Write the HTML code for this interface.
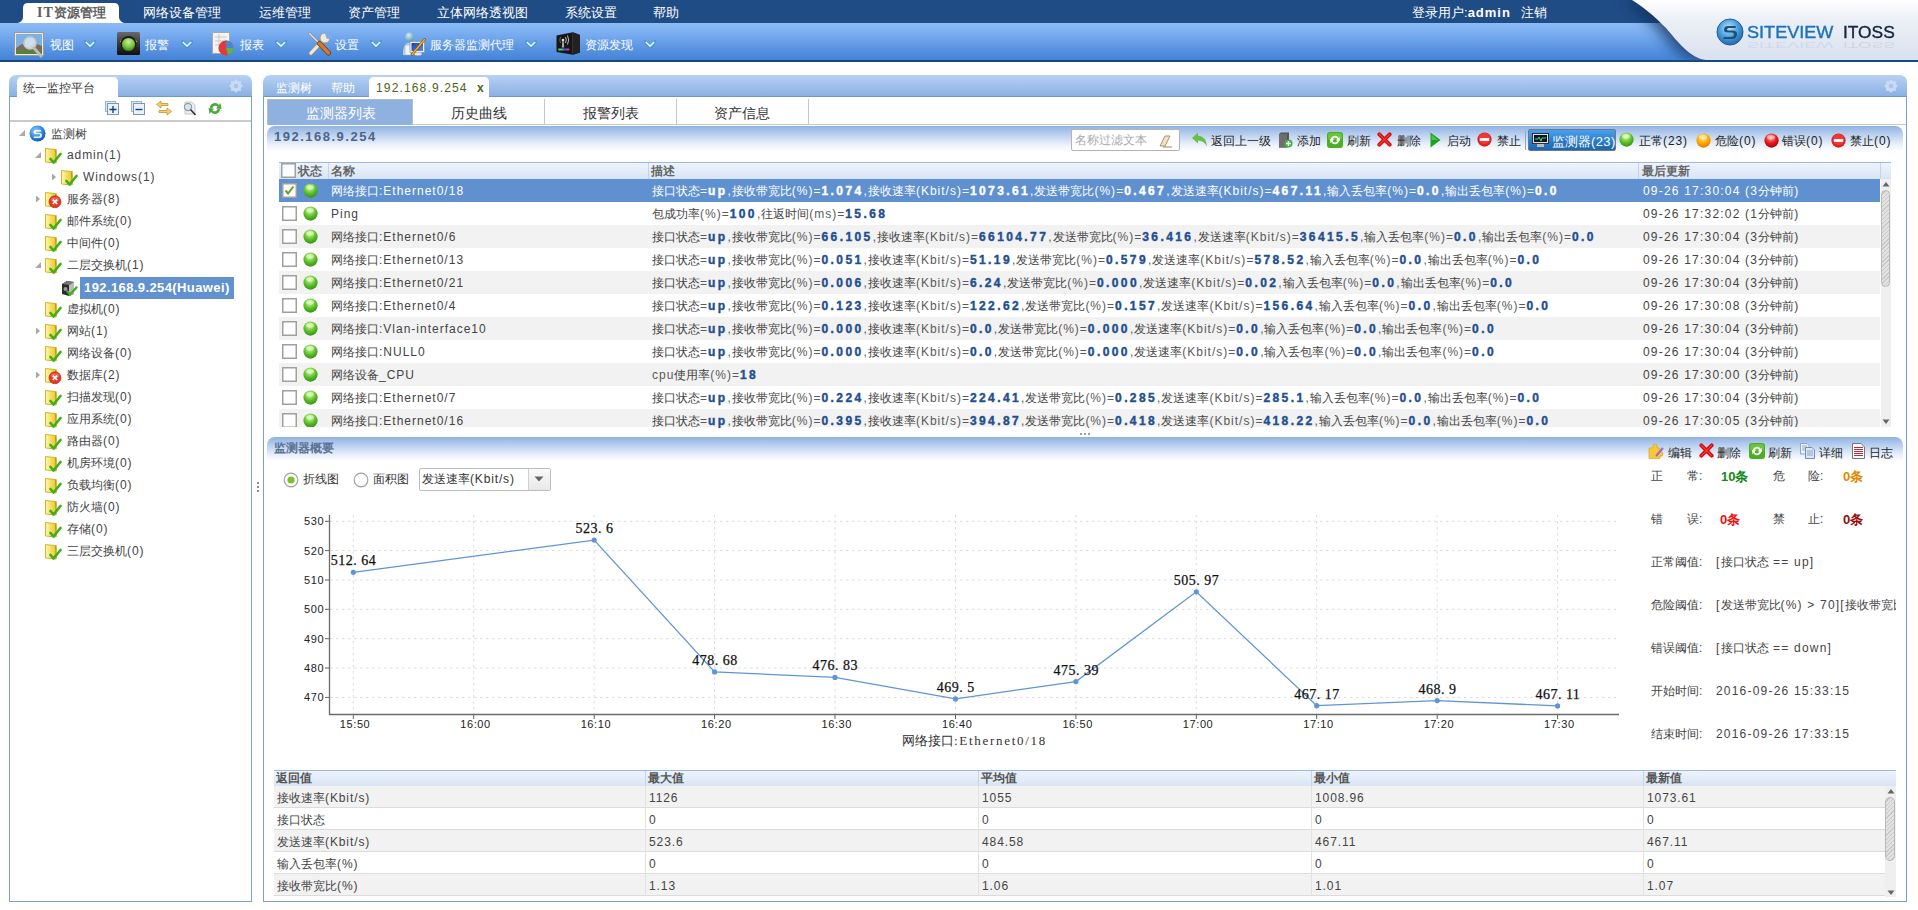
<!DOCTYPE html><html><head><meta charset="utf-8"><title>ITOSS</title><style>*{margin:0;padding:0}
html,body{width:1918px;height:910px;overflow:hidden;background:#fff}
body{position:relative;font-family:"Liberation Sans",sans-serif;font-size:12px;color:#333}
.a{position:absolute}
.t{white-space:nowrap;line-height:1.2}
b{font-weight:bold}
</style></head><body><div class="a" style="left:0px;top:0px;width:1918px;height:23px;background:#204c86"></div><div class="a" style="left:0px;top:23px;width:1918px;height:37px;background:linear-gradient(#8dbdf6 0%,#74a9ee 35%,#5993e0 70%,#4584d8 100%)"></div><div class="a" style="left:0px;top:60px;width:1918px;height:2px;background:#1b477f"></div><svg class="a" style="left:17px;top:2px" width="108" height="22" viewBox="0 0 108 22"><path d="M1 21 Q6 19 6 15 L6 6 Q6 1 11 1 L97 1 Q102 1 102 6 L102 15 Q102 19 107 21 Z" fill="#ffffff"/></svg><div class="a t" style="left:37px;top:5px;font-size:13px;font-weight:bold;color:#5e5e5e"><span style="font-family:'Liberation Serif',serif;font-size:14px;letter-spacing:1px">IT</span></div><div class="a t" style="left:54px;top:5px;font-size:13px;font-weight:bold;color:#5e5e5e">资源管理</div><div class="a t" style="left:143px;top:5px;font-size:13px;color:#ffffff">网络设备管理</div><div class="a t" style="left:259px;top:5px;font-size:13px;color:#ffffff">运维管理</div><div class="a t" style="left:348px;top:5px;font-size:13px;color:#ffffff">资产管理</div><div class="a t" style="left:437px;top:5px;font-size:13px;color:#ffffff">立体网络透视图</div><div class="a t" style="left:565px;top:5px;font-size:13px;color:#ffffff">系统设置</div><div class="a t" style="left:653px;top:5px;font-size:13px;color:#ffffff">帮助</div><div class="a t" style="left:1412px;top:5px;font-size:13px;color:#fff">登录用户:<b style="letter-spacing:1px">admin</b></div><div class="a t" style="left:1521px;top:5px;font-size:13px;color:#fff">注销</div><svg class="a" style="left:1560px;top:0" width="358" height="62" viewBox="0 0 358 62"><defs><linearGradient id="lg1" x1="0" y1="0" x2="0" y2="1"><stop offset="0" stop-color="#ffffff"/><stop offset="0.3" stop-color="#edf1f8"/><stop offset="1" stop-color="#d9e0ee"/></linearGradient><filter id="blr" x="-50%" y="-50%" width="200%" height="200%"><feGaussianBlur stdDeviation="7"/></filter><clipPath id="cp"><rect x="0" y="0" width="358" height="60"/></clipPath></defs><g clip-path="url(#cp)"><path d="M72 0 C88 10 98 20 106 28 C118 42 130 58 146 60 L358 60 L358 0 Z" fill="#0a2a55" opacity="0.75" filter="url(#blr)" transform="translate(-9,0)"/><path d="M72 0 C88 10 98 20 106 28 C118 42 130 58 146 60 L358 60 L358 0 Z" fill="url(#lg1)"/></g></svg><div class="a" style="left:1600px;top:60px;width:318px;height:2px;background:#1b477f"></div><svg class="a" style="left:1715px;top:17px" width="30" height="30" viewBox="0 0 30 30"><defs><radialGradient id="lc" cx="0.45" cy="0.35" r="0.7"><stop offset="0" stop-color="#bfe6fb"/><stop offset="0.5" stop-color="#4aa0dc"/><stop offset="1" stop-color="#1a5fa8"/></radialGradient></defs><circle cx="15" cy="15" r="13" fill="url(#lc)" stroke="#1e5d9e" stroke-width="1"/><path d="M21 9 L13 9 Q9 9 9 13 Q9 15.5 13 15.5 L17 15.5 Q19 15.5 19 17.5 Q19 20 16 20 L9 20 L8 22 L17 22 Q22 22 22 17 Q22 13.5 17.5 13.5 L13 13.5 Q12 13.5 12 12.5 Q12 11 14 11 L20.5 11 Z" fill="#1d4f78"/></svg><div class="a t" style="left:1747px;top:23px;font-size:16px;color:#1b72bd;-webkit-text-stroke:0.35px #1b72bd;transform:scaleX(1.13);transform-origin:0 0">SITEVIEW</div><div class="a t" style="left:1843px;top:23px;font-size:16px;color:#15263d;-webkit-text-stroke:0.35px #15263d;transform:scaleX(1.085);transform-origin:0 0">ITOSS</div><div class="a t" style="left:1747px;top:51px;font-size:16px;color:#1b72bd;opacity:0.10;transform:scaleX(1.13) scaleY(-0.6);transform-origin:0 0">SITEVIEW</div><div class="a t" style="left:1843px;top:51px;font-size:16px;color:#15263d;opacity:0.09;transform:scaleX(1.085) scaleY(-0.6);transform-origin:0 0">ITOSS</div><svg class="a" style="left:14px;top:31px" width="32" height="29" viewBox="0 0 32 29"><rect x="0.5" y="1.5" width="29" height="23" fill="#e8e8e8" stroke="#9a9a9a"/><rect x="2" y="3" width="26" height="20" fill="#7eb0e0"/><path d="M2 17 L8 13 L14 16 L20 12 L28 15 L28 23 L2 23 Z" fill="#7b6a5a"/><rect x="2" y="20" width="26" height="3" fill="#4f8a2a"/><circle cx="16" cy="12" r="6" fill="#dbe9f6" fill-opacity="0.85" stroke="#c9c9c9" stroke-width="1.6"/><path d="M20 17 L27 25" stroke="#bbbbbb" stroke-width="3" stroke-linecap="round"/></svg><div class="a t" style="left:50px;top:38px;font-size:12px;color:#fff">视图</div><svg class="a" style="left:84px;top:40px" width="12" height="9" viewBox="0 0 12 9"><path d="M1.5 1.8 L6 6.3 L10.5 1.8" fill="none" stroke="#2a8fb8" stroke-width="3.2" stroke-linecap="round" stroke-linejoin="round" opacity="0.55"/><path d="M1.8 2 L6 6 L10.2 2" fill="none" stroke="#e6fbff" stroke-width="1.7"/></svg><svg class="a" style="left:117px;top:32px" width="24" height="24" viewBox="0 0 24 24"><defs><linearGradient id="alg" x1="0" y1="0" x2="0" y2="1"><stop offset="0" stop-color="#6a6a6a"/><stop offset="0.5" stop-color="#3a3a3a"/><stop offset="1" stop-color="#0e0e0e"/></linearGradient><radialGradient id="alb" cx="0.5" cy="0.3" r="0.7"><stop offset="0" stop-color="#c8f09a"/><stop offset="0.6" stop-color="#7ac23a"/><stop offset="1" stop-color="#3d7a12"/></radialGradient></defs><rect x="0" y="0" width="23" height="23" rx="1.5" fill="url(#alg)"/><path d="M3.5 10 Q11.5 1 19.5 10" fill="none" stroke="#bdbdbd" stroke-width="1.6"/><circle cx="11.5" cy="12" r="8" fill="#1a1a1a"/><circle cx="11.5" cy="12.5" r="6.6" fill="url(#alb)"/></svg><div class="a t" style="left:145px;top:38px;font-size:12px;color:#fff">报警</div><svg class="a" style="left:181px;top:40px" width="12" height="9" viewBox="0 0 12 9"><path d="M1.5 1.8 L6 6.3 L10.5 1.8" fill="none" stroke="#2a8fb8" stroke-width="3.2" stroke-linecap="round" stroke-linejoin="round" opacity="0.55"/><path d="M1.8 2 L6 6 L10.2 2" fill="none" stroke="#e6fbff" stroke-width="1.7"/></svg><svg class="a" style="left:211px;top:32px" width="24" height="24" viewBox="0 0 24 24"><rect x="1.5" y="0.5" width="17" height="21" fill="#f4f4f4" stroke="#a8a8a8"/><path d="M4 5 H16 M4 9 H16 M4 13 H16 M8 2 V20" stroke="#c8c8c8"/><circle cx="15" cy="16" r="7.5" fill="#e23a3a"/><path d="M15 16 L15 8.5 A7.5 7.5 0 0 1 22.5 16 Z" fill="#4a86d0"/><path d="M15 16 L22.5 16 A7.5 7.5 0 0 1 17 23 Z" fill="#58b848"/></svg><div class="a t" style="left:240px;top:38px;font-size:12px;color:#fff">报表</div><svg class="a" style="left:275px;top:40px" width="12" height="9" viewBox="0 0 12 9"><path d="M1.5 1.8 L6 6.3 L10.5 1.8" fill="none" stroke="#2a8fb8" stroke-width="3.2" stroke-linecap="round" stroke-linejoin="round" opacity="0.55"/><path d="M1.8 2 L6 6 L10.2 2" fill="none" stroke="#e6fbff" stroke-width="1.7"/></svg><svg class="a" style="left:307px;top:31px" width="25" height="25" viewBox="0 0 25 25"><path d="M2.5 2.5 L12 12" stroke="#8d8d8d" stroke-width="2.6" stroke-linecap="round"/><path d="M2.5 2.5 L12 12" stroke="#e6e6e6" stroke-width="1.2" stroke-linecap="round"/><path d="M4 22 L17 8.5" stroke="#9a9486" stroke-width="4.6" stroke-linecap="round"/><path d="M4 22 L17 8.5" stroke="#efe9d8" stroke-width="3.2" stroke-linecap="round"/><circle cx="18" cy="7" r="5" fill="#efe9d8" stroke="#9a9486" stroke-width="0.9"/><path d="M17.5 0.5 L25 0.5 L25 8.5 L19.5 7.5 Z" fill="#7aaced"/><path d="M12.5 12.5 L21.5 22" stroke="#7a3f12" stroke-width="5" stroke-linecap="round"/><path d="M12.5 12.5 L21.5 22" stroke="#d07a34" stroke-width="3.4" stroke-linecap="round"/></svg><div class="a t" style="left:335px;top:38px;font-size:12px;color:#fff">设置</div><svg class="a" style="left:370px;top:40px" width="12" height="9" viewBox="0 0 12 9"><path d="M1.5 1.8 L6 6.3 L10.5 1.8" fill="none" stroke="#2a8fb8" stroke-width="3.2" stroke-linecap="round" stroke-linejoin="round" opacity="0.55"/><path d="M1.8 2 L6 6 L10.2 2" fill="none" stroke="#e6fbff" stroke-width="1.7"/></svg><svg class="a" style="left:402px;top:32px" width="24" height="24" viewBox="0 0 24 24"><defs><radialGradient id="agh" cx="0.4" cy="0.3" r="0.7"><stop offset="0" stop-color="#d8eef6"/><stop offset="1" stop-color="#5f9fb8"/></radialGradient><linearGradient id="ags" x1="0" y1="0" x2="1" y2="1"><stop offset="0" stop-color="#1a3fa8"/><stop offset="1" stop-color="#5a8ee0"/></linearGradient></defs><circle cx="7.5" cy="5" r="4.5" fill="url(#agh)"/><path d="M1 23 Q0.5 11 7.5 10.5 Q11 10.5 12 13 L12 23 Z" fill="#b7d7e4"/><rect x="3" y="13" width="6" height="10" fill="#f2f2f2" stroke="#9aa" stroke-width="0.6"/><rect x="8" y="9.5" width="14.5" height="11" fill="#f4f4f4" stroke="#8a9ab0" stroke-width="0.8"/><rect x="9.5" y="11" width="11.5" height="8" fill="url(#ags)"/><ellipse cx="16" cy="22" rx="4" ry="1.4" fill="#eee" stroke="#aaa" stroke-width="0.5"/><path d="M22.5 7.5 L10 22.5" stroke="#7a4a10" stroke-width="2.6" stroke-linecap="round"/><path d="M22.5 7.5 L10 22.5" stroke="#f0b030" stroke-width="1.5" stroke-linecap="round"/></svg><div class="a t" style="left:430px;top:38px;font-size:12px;color:#fff">服务器监测代理</div><svg class="a" style="left:525px;top:40px" width="12" height="9" viewBox="0 0 12 9"><path d="M1.5 1.8 L6 6.3 L10.5 1.8" fill="none" stroke="#2a8fb8" stroke-width="3.2" stroke-linecap="round" stroke-linejoin="round" opacity="0.55"/><path d="M1.8 2 L6 6 L10.2 2" fill="none" stroke="#e6fbff" stroke-width="1.7"/></svg><svg class="a" style="left:556px;top:32px" width="25" height="23" viewBox="0 0 25 23"><defs><linearGradient id="rb" x1="0" y1="0" x2="1" y2="0"><stop offset="0" stop-color="#6c3"/><stop offset="0.35" stop-color="#3c8"/><stop offset="0.6" stop-color="#44f"/><stop offset="0.8" stop-color="#c3c"/><stop offset="1" stop-color="#e44"/></linearGradient></defs><path d="M0.5 3.5 L17 0.3 L24 3 L24 20.5 L17 22.8 L0.5 20 Z" fill="#161616"/><path d="M16.5 0.5 L24 3 L24 20.5 L16.5 22.8 Z" fill="#222"/><path d="M16.5 1 L16.5 22.5" stroke="#3a3a3a" stroke-width="0.8"/><circle cx="7" cy="8" r="1.3" fill="#ddd"/><path d="M9.5 5 Q11 8 9.5 11 M11.5 3.5 Q13.8 8 11.5 12.5" fill="none" stroke="#bbb" stroke-width="1"/><path d="M4.5 5 Q3 8 4.5 11" fill="none" stroke="#666" stroke-width="1"/><path d="M6.3 9 L5.8 15.5 L8.2 15.5 L7.7 9 Z" fill="#aaa"/><rect x="2" y="16.5" width="11.5" height="2" rx="1" fill="url(#rb)"/></svg><div class="a t" style="left:585px;top:38px;font-size:12px;color:#fff">资源发现</div><svg class="a" style="left:644px;top:40px" width="12" height="9" viewBox="0 0 12 9"><path d="M1.5 1.8 L6 6.3 L10.5 1.8" fill="none" stroke="#2a8fb8" stroke-width="3.2" stroke-linecap="round" stroke-linejoin="round" opacity="0.55"/><path d="M1.8 2 L6 6 L10.2 2" fill="none" stroke="#e6fbff" stroke-width="1.7"/></svg><div class="a" style="left:9px;top:90px;width:243px;height:812px;box-sizing:border-box;border:1px solid #7b9fd3;border-top:none;background:#fff"></div><div class="a" style="left:9px;top:75px;width:243px;height:22px;box-sizing:border-box;border-radius:7px 7px 0 0;background:linear-gradient(#b7d2f4,#8bb0e2);border-bottom:1px solid #7098d0"></div><svg class="a" style="left:17px;top:77px" width="102" height="20" viewBox="0 0 102 20"><path d="M0 20 L0 5 Q0 0 5 0 L96 0 Q101 0 101 5 L101 20 Z" fill="#fff"/></svg><div class="a t" style="left:23px;top:81px;font-size:12px;color:#333">统一监控平台</div><svg class="a" style="left:229px;top:79px" width="14" height="14" viewBox="0 0 14 14"><polygon points="14.00,7.00 11.80,8.99 11.95,11.95 8.99,11.80 7.00,14.00 5.01,11.80 2.05,11.95 2.20,8.99 0.00,7.00 2.20,5.01 2.05,2.05 5.01,2.20 7.00,0.00 8.99,2.20 11.95,2.05 11.80,5.01" fill="#c9dbf3"/><circle cx="7" cy="7" r="2.3" fill="#aac4e8"/></svg><svg class="a" style="left:105px;top:101px" width="14" height="14" viewBox="0 0 14 14"><rect x="0.5" y="0.5" width="10" height="10" fill="#dbeafa" stroke="#9ab4d4"/><rect x="2.5" y="2.5" width="11" height="11" fill="#e9f3fc" stroke="#7f93b3"/><path d="M8 5 V12 M4.5 8.5 H11.5" stroke="#1a3f7a" stroke-width="1.4"/></svg><svg class="a" style="left:131px;top:101px" width="14" height="14" viewBox="0 0 14 14"><rect x="0.5" y="0.5" width="10" height="10" fill="#dbeafa" stroke="#9ab4d4"/><rect x="2.5" y="2.5" width="11" height="11" fill="#e9f3fc" stroke="#7f93b3"/><path d="M4.5 8.5 H11.5" stroke="#1a3f7a" stroke-width="1.4"/></svg><svg class="a" style="left:156px;top:100px" width="16" height="16" viewBox="0 0 16 16"><path d="M0.5 4.5 L5 1 L5 3.5 L12 3.5 L12 5.5 L5 5.5 L5 8 Z" fill="#f6d36a" stroke="#b88a20" stroke-width="0.7"/><path d="M15.5 11.5 L11 8 L11 10.5 L3 10.5 L3 12.5 L11 12.5 L11 15 Z" fill="#f6d36a" stroke="#b88a20" stroke-width="0.7"/></svg><svg class="a" style="left:183px;top:101px" width="14" height="15" viewBox="0 0 14 15"><path d="M2 1 L9 1 L12 4 L12 13 L2 13 Z" fill="#eee" stroke="#bbb" stroke-width="0.8"/><circle cx="5" cy="6" r="3.6" fill="#cfe6f7" stroke="#999" stroke-width="1.2"/><path d="M7.5 8.5 L12.5 14" stroke="#333" stroke-width="1.6"/></svg><svg class="a" style="left:207px;top:100px" width="16" height="17" viewBox="0 0 16 17"><path d="M3 8 A5 5 0 0 1 12 5 L13.5 3 L14.5 9 L9 8.5 L10.5 6.5 A3 3 0 0 0 5.5 8 Z" fill="#4caa3c"/><path d="M13 9 A5 5 0 0 1 4 12 L2.5 14 L1.5 8 L7 8.5 L5.5 10.5 A3 3 0 0 0 10.5 9 Z" fill="#4caa3c"/></svg><div class="a" style="left:10px;top:120px;width:241px;height:2px;background:#cacaca"></div><div class="a" style="left:257px;top:482px;width:2px;height:2px;background:#8a8a8a"></div><div class="a" style="left:257px;top:486px;width:2px;height:2px;background:#8a8a8a"></div><div class="a" style="left:257px;top:490px;width:2px;height:2px;background:#8a8a8a"></div><svg class="a" style="left:18px;top:129px" width="8" height="8" viewBox="0 0 8 8"><path d="M7 1 L7 7 L1 7 Z" fill="#a8a8a8"/></svg><svg class="a" style="left:29px;top:125px" width="17" height="17" viewBox="0 0 17 17"><defs><radialGradient id="lb" cx="0.4" cy="0.35" r="0.7"><stop offset="0" stop-color="#9fd4ff"/><stop offset="0.6" stop-color="#2f86e0"/><stop offset="1" stop-color="#1050b0"/></radialGradient></defs><circle cx="8.5" cy="8.5" r="8" fill="url(#lb)"/><path d="M12 5 L7 5 Q4.5 5 4.5 7.5 Q4.5 9 7 9 L10 9 Q11 9 11 10 Q11 11.5 9.5 11.5 L5 11.5 L4.5 13 L10 13 Q13 13 13 10.5 Q13 8 10.5 8 L7.5 8 Q6.5 8 6.5 7.3 Q6.5 6.5 7.5 6.5 L12 6.5 Z" fill="#fff" opacity="0.9"/></svg><div class="a t" style="left:51px;top:127px;font-size:12px;color:#444">监测树</div><svg class="a" style="left:34px;top:151px" width="8" height="8" viewBox="0 0 8 8"><path d="M7 1 L7 7 L1 7 Z" fill="#a8a8a8"/></svg><svg class="a" style="left:45px;top:148px" width="17" height="17" viewBox="0 0 17 17"><defs><linearGradient id="fy148" x1="0" y1="0" x2="1" y2="0"><stop offset="0" stop-color="#fff7b0"/><stop offset="1" stop-color="#e8c820"/></linearGradient></defs><path d="M0.5 0.5 L10 1.5 L11 2.5 L11 15 L0.5 14 Z" fill="url(#fy148)" stroke="#c9a400" stroke-width="0.8"/><path d="M10 1.5 L11.5 1 L11.5 14.5 L11 15 Z" fill="#b89a10"/><path d="M5.5 11 L8.5 14.5 L15.5 6" fill="none" stroke="#3fae1e" stroke-width="2.6" stroke-linecap="round" stroke-linejoin="round"/></svg><div class="a t" style="left:67px;top:148px;font-size:12px;color:#444"><span style="letter-spacing:0.9px">admin(1)</span></div><svg class="a" style="left:50px;top:173px" width="8" height="8" viewBox="0 0 8 8"><path d="M2 0.5 L6 4 L2 7.5 Z" fill="#a8a8a8"/></svg><svg class="a" style="left:61px;top:170px" width="17" height="17" viewBox="0 0 17 17"><defs><linearGradient id="fy170" x1="0" y1="0" x2="1" y2="0"><stop offset="0" stop-color="#fff7b0"/><stop offset="1" stop-color="#e8c820"/></linearGradient></defs><path d="M0.5 0.5 L10 1.5 L11 2.5 L11 15 L0.5 14 Z" fill="url(#fy170)" stroke="#c9a400" stroke-width="0.8"/><path d="M10 1.5 L11.5 1 L11.5 14.5 L11 15 Z" fill="#b89a10"/><path d="M5.5 11 L8.5 14.5 L15.5 6" fill="none" stroke="#3fae1e" stroke-width="2.6" stroke-linecap="round" stroke-linejoin="round"/></svg><div class="a t" style="left:83px;top:170px;font-size:12px;color:#444"><span style="letter-spacing:0.9px">Windows(1)</span></div><svg class="a" style="left:34px;top:195px" width="8" height="8" viewBox="0 0 8 8"><path d="M2 0.5 L6 4 L2 7.5 Z" fill="#a8a8a8"/></svg><svg class="a" style="left:45px;top:192px" width="17" height="17" viewBox="0 0 17 17"><defs><linearGradient id="fy192" x1="0" y1="0" x2="1" y2="0"><stop offset="0" stop-color="#fff7b0"/><stop offset="1" stop-color="#e8c820"/></linearGradient></defs><path d="M0.5 0.5 L10 1.5 L11 2.5 L11 15 L0.5 14 Z" fill="url(#fy192)" stroke="#c9a400" stroke-width="0.8"/><path d="M10 1.5 L11.5 1 L11.5 14.5 L11 15 Z" fill="#b89a10"/><circle cx="10" cy="9.8" r="6" fill="#e23a28" stroke="#b01a10" stroke-width="0.6"/><ellipse cx="10" cy="7.6" rx="4" ry="2.4" fill="#ff8a7a" opacity="0.55"/><path d="M7.8 7.6 L12.2 12 M12.2 7.6 L7.8 12" stroke="#fff" stroke-width="1.7"/></svg><div class="a t" style="left:67px;top:192px;font-size:12px;color:#444">服务器<span style="letter-spacing:0.9px">(8)</span></div><svg class="a" style="left:45px;top:214px" width="17" height="17" viewBox="0 0 17 17"><defs><linearGradient id="fy214" x1="0" y1="0" x2="1" y2="0"><stop offset="0" stop-color="#fff7b0"/><stop offset="1" stop-color="#e8c820"/></linearGradient></defs><path d="M0.5 0.5 L10 1.5 L11 2.5 L11 15 L0.5 14 Z" fill="url(#fy214)" stroke="#c9a400" stroke-width="0.8"/><path d="M10 1.5 L11.5 1 L11.5 14.5 L11 15 Z" fill="#b89a10"/><path d="M5.5 11 L8.5 14.5 L15.5 6" fill="none" stroke="#3fae1e" stroke-width="2.6" stroke-linecap="round" stroke-linejoin="round"/></svg><div class="a t" style="left:67px;top:214px;font-size:12px;color:#444">邮件系统<span style="letter-spacing:0.9px">(0)</span></div><svg class="a" style="left:45px;top:236px" width="17" height="17" viewBox="0 0 17 17"><defs><linearGradient id="fy236" x1="0" y1="0" x2="1" y2="0"><stop offset="0" stop-color="#fff7b0"/><stop offset="1" stop-color="#e8c820"/></linearGradient></defs><path d="M0.5 0.5 L10 1.5 L11 2.5 L11 15 L0.5 14 Z" fill="url(#fy236)" stroke="#c9a400" stroke-width="0.8"/><path d="M10 1.5 L11.5 1 L11.5 14.5 L11 15 Z" fill="#b89a10"/><path d="M5.5 11 L8.5 14.5 L15.5 6" fill="none" stroke="#3fae1e" stroke-width="2.6" stroke-linecap="round" stroke-linejoin="round"/></svg><div class="a t" style="left:67px;top:236px;font-size:12px;color:#444">中间件<span style="letter-spacing:0.9px">(0)</span></div><svg class="a" style="left:34px;top:261px" width="8" height="8" viewBox="0 0 8 8"><path d="M7 1 L7 7 L1 7 Z" fill="#a8a8a8"/></svg><svg class="a" style="left:45px;top:258px" width="17" height="17" viewBox="0 0 17 17"><defs><linearGradient id="fy258" x1="0" y1="0" x2="1" y2="0"><stop offset="0" stop-color="#fff7b0"/><stop offset="1" stop-color="#e8c820"/></linearGradient></defs><path d="M0.5 0.5 L10 1.5 L11 2.5 L11 15 L0.5 14 Z" fill="url(#fy258)" stroke="#c9a400" stroke-width="0.8"/><path d="M10 1.5 L11.5 1 L11.5 14.5 L11 15 Z" fill="#b89a10"/><path d="M5.5 11 L8.5 14.5 L15.5 6" fill="none" stroke="#3fae1e" stroke-width="2.6" stroke-linecap="round" stroke-linejoin="round"/></svg><div class="a t" style="left:67px;top:258px;font-size:12px;color:#444">二层交换机<span style="letter-spacing:0.9px">(1)</span></div><svg class="a" style="left:61px;top:280px" width="17" height="17" viewBox="0 0 17 17"><path d="M1 4 L6 1 L13 2 L13 14 L8 16 L1 14 Z" fill="#2a2a2a"/><path d="M6 1 L13 2 L8 5 L1 4 Z" fill="#777"/><path d="M8 5 L13 2 L13 14 L8 16 Z" fill="#bbb"/><circle cx="4.5" cy="9" r="2" fill="#999"/><path d="M6.5 11.5 L9 14.5 L15.5 7.5" fill="none" stroke="#3fae1e" stroke-width="2.4" stroke-linecap="round" stroke-linejoin="round"/></svg><div class="a" style="left:80px;top:277px;width:154px;height:22px;background:#6291d0"></div><div class="a t" style="left:84px;top:280px;font-size:13px;font-weight:bold;color:#fff"><span style="letter-spacing:0.4px">192.168.9.254(Huawei)</span></div><svg class="a" style="left:45px;top:302px" width="17" height="17" viewBox="0 0 17 17"><defs><linearGradient id="fy302" x1="0" y1="0" x2="1" y2="0"><stop offset="0" stop-color="#fff7b0"/><stop offset="1" stop-color="#e8c820"/></linearGradient></defs><path d="M0.5 0.5 L10 1.5 L11 2.5 L11 15 L0.5 14 Z" fill="url(#fy302)" stroke="#c9a400" stroke-width="0.8"/><path d="M10 1.5 L11.5 1 L11.5 14.5 L11 15 Z" fill="#b89a10"/><path d="M5.5 11 L8.5 14.5 L15.5 6" fill="none" stroke="#3fae1e" stroke-width="2.6" stroke-linecap="round" stroke-linejoin="round"/></svg><div class="a t" style="left:67px;top:302px;font-size:12px;color:#444">虚拟机<span style="letter-spacing:0.9px">(0)</span></div><svg class="a" style="left:34px;top:327px" width="8" height="8" viewBox="0 0 8 8"><path d="M2 0.5 L6 4 L2 7.5 Z" fill="#a8a8a8"/></svg><svg class="a" style="left:45px;top:324px" width="17" height="17" viewBox="0 0 17 17"><defs><linearGradient id="fy324" x1="0" y1="0" x2="1" y2="0"><stop offset="0" stop-color="#fff7b0"/><stop offset="1" stop-color="#e8c820"/></linearGradient></defs><path d="M0.5 0.5 L10 1.5 L11 2.5 L11 15 L0.5 14 Z" fill="url(#fy324)" stroke="#c9a400" stroke-width="0.8"/><path d="M10 1.5 L11.5 1 L11.5 14.5 L11 15 Z" fill="#b89a10"/><path d="M5.5 11 L8.5 14.5 L15.5 6" fill="none" stroke="#3fae1e" stroke-width="2.6" stroke-linecap="round" stroke-linejoin="round"/></svg><div class="a t" style="left:67px;top:324px;font-size:12px;color:#444">网站<span style="letter-spacing:0.9px">(1)</span></div><svg class="a" style="left:45px;top:346px" width="17" height="17" viewBox="0 0 17 17"><defs><linearGradient id="fy346" x1="0" y1="0" x2="1" y2="0"><stop offset="0" stop-color="#fff7b0"/><stop offset="1" stop-color="#e8c820"/></linearGradient></defs><path d="M0.5 0.5 L10 1.5 L11 2.5 L11 15 L0.5 14 Z" fill="url(#fy346)" stroke="#c9a400" stroke-width="0.8"/><path d="M10 1.5 L11.5 1 L11.5 14.5 L11 15 Z" fill="#b89a10"/><path d="M5.5 11 L8.5 14.5 L15.5 6" fill="none" stroke="#3fae1e" stroke-width="2.6" stroke-linecap="round" stroke-linejoin="round"/></svg><div class="a t" style="left:67px;top:346px;font-size:12px;color:#444">网络设备<span style="letter-spacing:0.9px">(0)</span></div><svg class="a" style="left:34px;top:371px" width="8" height="8" viewBox="0 0 8 8"><path d="M2 0.5 L6 4 L2 7.5 Z" fill="#a8a8a8"/></svg><svg class="a" style="left:45px;top:368px" width="17" height="17" viewBox="0 0 17 17"><defs><linearGradient id="fy368" x1="0" y1="0" x2="1" y2="0"><stop offset="0" stop-color="#fff7b0"/><stop offset="1" stop-color="#e8c820"/></linearGradient></defs><path d="M0.5 0.5 L10 1.5 L11 2.5 L11 15 L0.5 14 Z" fill="url(#fy368)" stroke="#c9a400" stroke-width="0.8"/><path d="M10 1.5 L11.5 1 L11.5 14.5 L11 15 Z" fill="#b89a10"/><circle cx="10" cy="9.8" r="6" fill="#e23a28" stroke="#b01a10" stroke-width="0.6"/><ellipse cx="10" cy="7.6" rx="4" ry="2.4" fill="#ff8a7a" opacity="0.55"/><path d="M7.8 7.6 L12.2 12 M12.2 7.6 L7.8 12" stroke="#fff" stroke-width="1.7"/></svg><div class="a t" style="left:67px;top:368px;font-size:12px;color:#444">数据库<span style="letter-spacing:0.9px">(2)</span></div><svg class="a" style="left:45px;top:390px" width="17" height="17" viewBox="0 0 17 17"><defs><linearGradient id="fy390" x1="0" y1="0" x2="1" y2="0"><stop offset="0" stop-color="#fff7b0"/><stop offset="1" stop-color="#e8c820"/></linearGradient></defs><path d="M0.5 0.5 L10 1.5 L11 2.5 L11 15 L0.5 14 Z" fill="url(#fy390)" stroke="#c9a400" stroke-width="0.8"/><path d="M10 1.5 L11.5 1 L11.5 14.5 L11 15 Z" fill="#b89a10"/><path d="M5.5 11 L8.5 14.5 L15.5 6" fill="none" stroke="#3fae1e" stroke-width="2.6" stroke-linecap="round" stroke-linejoin="round"/></svg><div class="a t" style="left:67px;top:390px;font-size:12px;color:#444">扫描发现<span style="letter-spacing:0.9px">(0)</span></div><svg class="a" style="left:45px;top:412px" width="17" height="17" viewBox="0 0 17 17"><defs><linearGradient id="fy412" x1="0" y1="0" x2="1" y2="0"><stop offset="0" stop-color="#fff7b0"/><stop offset="1" stop-color="#e8c820"/></linearGradient></defs><path d="M0.5 0.5 L10 1.5 L11 2.5 L11 15 L0.5 14 Z" fill="url(#fy412)" stroke="#c9a400" stroke-width="0.8"/><path d="M10 1.5 L11.5 1 L11.5 14.5 L11 15 Z" fill="#b89a10"/><path d="M5.5 11 L8.5 14.5 L15.5 6" fill="none" stroke="#3fae1e" stroke-width="2.6" stroke-linecap="round" stroke-linejoin="round"/></svg><div class="a t" style="left:67px;top:412px;font-size:12px;color:#444">应用系统<span style="letter-spacing:0.9px">(0)</span></div><svg class="a" style="left:45px;top:434px" width="17" height="17" viewBox="0 0 17 17"><defs><linearGradient id="fy434" x1="0" y1="0" x2="1" y2="0"><stop offset="0" stop-color="#fff7b0"/><stop offset="1" stop-color="#e8c820"/></linearGradient></defs><path d="M0.5 0.5 L10 1.5 L11 2.5 L11 15 L0.5 14 Z" fill="url(#fy434)" stroke="#c9a400" stroke-width="0.8"/><path d="M10 1.5 L11.5 1 L11.5 14.5 L11 15 Z" fill="#b89a10"/><path d="M5.5 11 L8.5 14.5 L15.5 6" fill="none" stroke="#3fae1e" stroke-width="2.6" stroke-linecap="round" stroke-linejoin="round"/></svg><div class="a t" style="left:67px;top:434px;font-size:12px;color:#444">路由器<span style="letter-spacing:0.9px">(0)</span></div><svg class="a" style="left:45px;top:456px" width="17" height="17" viewBox="0 0 17 17"><defs><linearGradient id="fy456" x1="0" y1="0" x2="1" y2="0"><stop offset="0" stop-color="#fff7b0"/><stop offset="1" stop-color="#e8c820"/></linearGradient></defs><path d="M0.5 0.5 L10 1.5 L11 2.5 L11 15 L0.5 14 Z" fill="url(#fy456)" stroke="#c9a400" stroke-width="0.8"/><path d="M10 1.5 L11.5 1 L11.5 14.5 L11 15 Z" fill="#b89a10"/><path d="M5.5 11 L8.5 14.5 L15.5 6" fill="none" stroke="#3fae1e" stroke-width="2.6" stroke-linecap="round" stroke-linejoin="round"/></svg><div class="a t" style="left:67px;top:456px;font-size:12px;color:#444">机房环境<span style="letter-spacing:0.9px">(0)</span></div><svg class="a" style="left:45px;top:478px" width="17" height="17" viewBox="0 0 17 17"><defs><linearGradient id="fy478" x1="0" y1="0" x2="1" y2="0"><stop offset="0" stop-color="#fff7b0"/><stop offset="1" stop-color="#e8c820"/></linearGradient></defs><path d="M0.5 0.5 L10 1.5 L11 2.5 L11 15 L0.5 14 Z" fill="url(#fy478)" stroke="#c9a400" stroke-width="0.8"/><path d="M10 1.5 L11.5 1 L11.5 14.5 L11 15 Z" fill="#b89a10"/><path d="M5.5 11 L8.5 14.5 L15.5 6" fill="none" stroke="#3fae1e" stroke-width="2.6" stroke-linecap="round" stroke-linejoin="round"/></svg><div class="a t" style="left:67px;top:478px;font-size:12px;color:#444">负载均衡<span style="letter-spacing:0.9px">(0)</span></div><svg class="a" style="left:45px;top:500px" width="17" height="17" viewBox="0 0 17 17"><defs><linearGradient id="fy500" x1="0" y1="0" x2="1" y2="0"><stop offset="0" stop-color="#fff7b0"/><stop offset="1" stop-color="#e8c820"/></linearGradient></defs><path d="M0.5 0.5 L10 1.5 L11 2.5 L11 15 L0.5 14 Z" fill="url(#fy500)" stroke="#c9a400" stroke-width="0.8"/><path d="M10 1.5 L11.5 1 L11.5 14.5 L11 15 Z" fill="#b89a10"/><path d="M5.5 11 L8.5 14.5 L15.5 6" fill="none" stroke="#3fae1e" stroke-width="2.6" stroke-linecap="round" stroke-linejoin="round"/></svg><div class="a t" style="left:67px;top:500px;font-size:12px;color:#444">防火墙<span style="letter-spacing:0.9px">(0)</span></div><svg class="a" style="left:45px;top:522px" width="17" height="17" viewBox="0 0 17 17"><defs><linearGradient id="fy522" x1="0" y1="0" x2="1" y2="0"><stop offset="0" stop-color="#fff7b0"/><stop offset="1" stop-color="#e8c820"/></linearGradient></defs><path d="M0.5 0.5 L10 1.5 L11 2.5 L11 15 L0.5 14 Z" fill="url(#fy522)" stroke="#c9a400" stroke-width="0.8"/><path d="M10 1.5 L11.5 1 L11.5 14.5 L11 15 Z" fill="#b89a10"/><path d="M5.5 11 L8.5 14.5 L15.5 6" fill="none" stroke="#3fae1e" stroke-width="2.6" stroke-linecap="round" stroke-linejoin="round"/></svg><div class="a t" style="left:67px;top:522px;font-size:12px;color:#444">存储<span style="letter-spacing:0.9px">(0)</span></div><svg class="a" style="left:45px;top:544px" width="17" height="17" viewBox="0 0 17 17"><defs><linearGradient id="fy544" x1="0" y1="0" x2="1" y2="0"><stop offset="0" stop-color="#fff7b0"/><stop offset="1" stop-color="#e8c820"/></linearGradient></defs><path d="M0.5 0.5 L10 1.5 L11 2.5 L11 15 L0.5 14 Z" fill="url(#fy544)" stroke="#c9a400" stroke-width="0.8"/><path d="M10 1.5 L11.5 1 L11.5 14.5 L11 15 Z" fill="#b89a10"/><path d="M5.5 11 L8.5 14.5 L15.5 6" fill="none" stroke="#3fae1e" stroke-width="2.6" stroke-linecap="round" stroke-linejoin="round"/></svg><div class="a t" style="left:67px;top:544px;font-size:12px;color:#444">三层交换机<span style="letter-spacing:0.9px">(0)</span></div><div class="a" style="left:263px;top:90px;width:1644px;height:812px;box-sizing:border-box;border:1px solid #7b9fd3;border-top:none;background:#fff"></div><div class="a" style="left:263px;top:75px;width:1644px;height:22px;box-sizing:border-box;border-radius:7px 7px 0 0;background:linear-gradient(#b7d2f4,#8bb0e2);border-bottom:1px solid #7098d0"></div><div class="a t" style="left:276px;top:81px;font-size:12px;color:#fff">监测树</div><div class="a t" style="left:331px;top:81px;font-size:12px;color:#fff">帮助</div><svg class="a" style="left:369px;top:77px" width="121" height="20" viewBox="0 0 121 20"><path d="M0 20 L0 5 Q0 0 5 0 L115 0 Q120 0 120 5 L120 20 Z" fill="#fff"/></svg><div class="a t" style="left:376px;top:81px;font-size:12px;color:#4d6420"><span style="letter-spacing:1.15px">192.168.9.254</span></div><div class="a t" style="left:477px;top:81px;font-size:12px;font-weight:bold;color:#4d6420">x</div><svg class="a" style="left:1884px;top:79px" width="14" height="14" viewBox="0 0 14 14"><polygon points="14.00,7.00 11.80,8.99 11.95,11.95 8.99,11.80 7.00,14.00 5.01,11.80 2.05,11.95 2.20,8.99 0.00,7.00 2.20,5.01 2.05,2.05 5.01,2.20 7.00,0.00 8.99,2.20 11.95,2.05 11.80,5.01" fill="#c9dbf3"/><circle cx="7" cy="7" r="2.3" fill="#aac4e8"/></svg><div class="a" style="left:264px;top:97px;width:1642px;height:28px;background:#fff"></div><div class="a" style="left:267px;top:99px;width:146px;height:26px;box-sizing:border-box;background:#8fb1e0;border-top:1px solid #b8b8b8;border-left:1px solid #c0c0c0;border-right:1px solid #c0c0c0"></div><div class="a t" style="left:306px;top:105px;font-size:14px;color:#fff">监测器列表</div><div class="a" style="left:544px;top:99px;width:1px;height:25px;background:#c8c8c8"></div><div class="a" style="left:676px;top:99px;width:1px;height:25px;background:#c8c8c8"></div><div class="a" style="left:808px;top:99px;width:1px;height:25px;background:#c8c8c8"></div><div class="a t" style="left:451px;top:105px;font-size:14px;color:#333">历史曲线</div><div class="a t" style="left:583px;top:105px;font-size:14px;color:#333">报警列表</div><div class="a t" style="left:714px;top:105px;font-size:14px;color:#333">资产信息</div><div class="a" style="left:413px;top:124px;width:1493px;height:1px;background:#c8c8c8"></div><div class="a" style="left:267px;top:126px;width:1636px;height:26px;border-radius:8px 8px 0 0;background:linear-gradient(#8fb2e1 0%,#c3d6f1 40%,#eef3fb 75%,#ffffff 100%)"></div><div class="a t" style="left:274px;top:129px;font-size:13px;font-weight:bold;color:#4d6489"><span style="letter-spacing:1.5px">192.168.9.254</span></div><div class="a" style="left:1071px;top:129px;width:109px;height:22px;box-sizing:border-box;border:1px solid #b4b4b4;border-radius:2px;background:#fff"></div><div class="a t" style="left:1075px;top:133px;font-size:12px;color:#aaa">名称过滤文本</div><svg class="a" style="left:1158px;top:134px" width="15" height="14" viewBox="0 0 15 14"><path d="M2 12 L7 2 L12 2 L7 12 Z" fill="#efe4c8" stroke="#a08a60" stroke-width="0.9"/><path d="M5 13 H14" stroke="#a08a60"/></svg><svg class="a" style="left:1191px;top:132px" width="17" height="16" viewBox="0 0 17 16"><path d="M1 6 L7 0.5 L7 3.5 Q15 4 16 14.5 Q13 8.5 7 8.5 L7 11.5 Z" fill="#6abf4a"/></svg><div class="a t" style="left:1211px;top:134px;font-size:12px;color:#222">返回上一级</div><svg class="a" style="left:1278px;top:132px" width="15" height="16" viewBox="0 0 15 16"><path d="M1 2 L3 0.5 L11 0.5 L11 14 L9 15.5 L1 15.5 Z" fill="#555"/><path d="M1 2 L9 2 L9 15.5 L1 15.5 Z" fill="#6e6e6e"/><circle cx="10.5" cy="11.5" r="4" fill="#3fb43a"/><path d="M10.5 9 V14 M8 11.5 H13" stroke="#fff" stroke-width="1.4"/></svg><div class="a t" style="left:1297px;top:134px;font-size:12px;color:#222">添加</div><svg class="a" style="left:1327px;top:132px" width="16" height="16" viewBox="0 0 16 16"><rect x="0" y="0" width="16" height="16" rx="3" fill="#4cae22"/><rect x="1" y="1" width="14" height="7" rx="2" fill="#7fd04a" opacity="0.6"/><path d="M4 8.5 A4 4 0 0 1 11.5 6 L12.5 4.5 L13 9 L9 8.5 L10.3 7.2 A2.5 2.5 0 0 0 5.5 8.5 Z" fill="#fff"/><path d="M12 7.5 A4 4 0 0 1 4.5 10 L3.5 11.5 L3 7 L7 7.5 L5.7 8.8 A2.5 2.5 0 0 0 10.5 7.5 Z" fill="#fff"/></svg><div class="a t" style="left:1347px;top:134px;font-size:12px;color:#222">刷新</div><svg class="a" style="left:1377px;top:132px" width="15" height="15" viewBox="0 0 16 16"><path d="M2.5 2.5 L13.5 13.5 M13.5 2.5 L2.5 13.5" stroke="#d81010" stroke-width="4.2" stroke-linecap="round"/><path d="M2.5 2.5 L13.5 13.5 M13.5 2.5 L2.5 13.5" stroke="#ff5a5a" stroke-width="1.2" stroke-linecap="round" opacity="0.6"/></svg><div class="a t" style="left:1397px;top:134px;font-size:12px;color:#222">删除</div><svg class="a" style="left:1430px;top:132px" width="11" height="16" viewBox="0 0 11 16"><path d="M0.5 0.5 L10.5 8 L0.5 15.5 Z" fill="#1ea020"/><path d="M1.5 2.5 L8 8 L1.5 8 Z" fill="#5fd05a" opacity="0.7"/></svg><div class="a t" style="left:1447px;top:134px;font-size:12px;color:#222">启动</div><svg class="a" style="left:1477px;top:132px" width="15" height="15" viewBox="0 0 16 16"><circle cx="8" cy="8" r="7.6" fill="#e02020"/><circle cx="8" cy="7" r="6" fill="#ff5050" opacity="0.5"/><rect x="3" y="6.5" width="10" height="3" fill="#fff"/></svg><div class="a t" style="left:1497px;top:134px;font-size:12px;color:#222">禁止</div><div class="a" style="left:1525px;top:131px;width:1px;height:19px;background:#8aa6cc"></div><div class="a" style="left:1528px;top:129px;width:88px;height:22px;box-sizing:border-box;border:1px solid #6a7a8a;border-radius:2px;background:linear-gradient(#4aa0ee,#2a7ac8 60%,#1c66ac)"></div><svg class="a" style="left:1532px;top:133px" width="17" height="15" viewBox="0 0 17 15"><rect x="0.5" y="0.5" width="16" height="10" fill="#ddd" stroke="#333"/><rect x="2" y="2" width="13" height="7" fill="#113"/><path d="M3 6 L6 6 L7 4 L9 8 L10 5 L14 5" stroke="#4f4" fill="none" stroke-width="0.9"/><rect x="5" y="11" width="7" height="3" fill="#bbb"/></svg><div class="a t" style="left:1552px;top:134px;font-size:13px;color:#fff">监测器<span style="letter-spacing:0.4px">(23)</span></div><svg class="a" style="left:1619px;top:132px" width="15" height="15" viewBox="0 0 16 16"><defs><radialGradient id="g1" cx="0.45" cy="0.3" r="0.75"><stop offset="0" stop-color="#d6ff9a"/><stop offset="0.55" stop-color="#5cc02a"/><stop offset="1" stop-color="#2f8a12"/></radialGradient></defs><circle cx="8" cy="8" r="7.6" fill="url(#g1)"/><ellipse cx="7.5" cy="4.6" rx="4.2" ry="2.6" fill="#fff" opacity="0.45"/></svg><div class="a t" style="left:1639px;top:134px;font-size:12px;color:#222">正常<span style="letter-spacing:0.9px">(23)</span></div><svg class="a" style="left:1696px;top:133px" width="15" height="15" viewBox="0 0 16 16"><defs><radialGradient id="g2" cx="0.45" cy="0.3" r="0.75"><stop offset="0" stop-color="#ffe680"/><stop offset="0.55" stop-color="#ffa800"/><stop offset="1" stop-color="#e07000"/></radialGradient></defs><circle cx="8" cy="8" r="7.6" fill="url(#g2)"/><ellipse cx="7.5" cy="4.6" rx="4.2" ry="2.6" fill="#fff" opacity="0.45"/></svg><div class="a t" style="left:1715px;top:134px;font-size:12px;color:#222">危险<span style="letter-spacing:0.9px">(0)</span></div><svg class="a" style="left:1764px;top:133px" width="15" height="15" viewBox="0 0 16 16"><defs><radialGradient id="g3" cx="0.45" cy="0.3" r="0.75"><stop offset="0" stop-color="#ff9a9a"/><stop offset="0.55" stop-color="#e81818"/><stop offset="1" stop-color="#9a0000"/></radialGradient></defs><circle cx="8" cy="8" r="7.6" fill="url(#g3)"/><ellipse cx="7.5" cy="4.6" rx="4.2" ry="2.6" fill="#fff" opacity="0.45"/></svg><div class="a t" style="left:1782px;top:134px;font-size:12px;color:#222">错误<span style="letter-spacing:0.9px">(0)</span></div><svg class="a" style="left:1831px;top:133px" width="15" height="15" viewBox="0 0 16 16"><circle cx="8" cy="8" r="7.6" fill="#e02020"/><circle cx="8" cy="7" r="6" fill="#ff5050" opacity="0.5"/><rect x="3" y="6.5" width="10" height="3" fill="#fff"/></svg><div class="a t" style="left:1850px;top:134px;font-size:12px;color:#222">禁止<span style="letter-spacing:0.9px">(0)</span></div><div class="a" style="left:279px;top:162px;width:1612px;height:17px;box-sizing:border-box;border-top:1px solid #9ab8e4;background:linear-gradient(#eef4fc,#d8e4f5)"></div><svg class="a" style="left:281px;top:163px" width="15" height="15" viewBox="0 0 15 15"><rect x="0.75" y="0.75" width="13.5" height="13.5" fill="#fbfcfe" stroke="#a0a0a0" stroke-width="1.5"/></svg><div class="a t" style="left:298px;top:164px;font-size:12px;font-weight:bold;color:#666">状态</div><div class="a" style="left:328px;top:163px;width:1px;height:16px;background:#c5d4ea"></div><div class="a t" style="left:331px;top:164px;font-size:12px;font-weight:bold;color:#666">名称</div><div class="a" style="left:648px;top:163px;width:1px;height:16px;background:#c5d4ea"></div><div class="a t" style="left:651px;top:164px;font-size:12px;font-weight:bold;color:#666">描述</div><div class="a" style="left:1638px;top:163px;width:1px;height:16px;background:#c5d4ea"></div><div class="a t" style="left:1642px;top:164px;font-size:12px;font-weight:bold;color:#666">最后更新</div><div class="a" style="left:1880px;top:163px;width:1px;height:16px;background:#c5d4ea"></div><div class="a" style="left:279px;top:179px;width:1601px;height:23px;background:#5f90d0"></div><svg class="a" style="left:282px;top:183px" width="15" height="15" viewBox="0 0 15 15"><rect x="0.75" y="0.75" width="13.5" height="13.5" fill="#fff" stroke="#a0a0a0" stroke-width="1.5"/><path d="M3.5 7.5 L6 10.5 L11.5 3.5" fill="none" stroke="#6a9a1a" stroke-width="2"/></svg><svg class="a" style="left:303px;top:183px" width="15" height="15" viewBox="0 0 16 16"><defs><radialGradient id="g4" cx="0.45" cy="0.3" r="0.75"><stop offset="0" stop-color="#d6ff9a"/><stop offset="0.55" stop-color="#5cc02a"/><stop offset="1" stop-color="#2f8a12"/></radialGradient></defs><circle cx="8" cy="8" r="7.6" fill="url(#g4)"/><ellipse cx="7.5" cy="4.6" rx="4.2" ry="2.6" fill="#fff" opacity="0.45"/></svg><div class="a t" style="left:331px;top:184px;font-size:12px;color:#fff;">网络接口<span style="letter-spacing:1.0px">:Ethernet0/18</span></div><div class="a t" style="left:652px;top:184px;font-size:12px;color:#fff;white-space:nowrap;">接口状态<span style="letter-spacing:1.0px">=</span><b style="color:#fff;-webkit-text-stroke:0.4px #fff"><span style="letter-spacing:2.4px">up</span></b><span style="letter-spacing:1.0px">,</span>接收带宽比<span style="letter-spacing:1.0px">(%)</span><span style="letter-spacing:1.0px">=</span><b style="color:#fff;-webkit-text-stroke:0.4px #fff"><span style="letter-spacing:2.4px">1.074</span></b><span style="letter-spacing:1.0px">,</span>接收速率<span style="letter-spacing:1.0px">(Kbit/s)</span><span style="letter-spacing:1.0px">=</span><b style="color:#fff;-webkit-text-stroke:0.4px #fff"><span style="letter-spacing:2.4px">1073.61</span></b><span style="letter-spacing:1.0px">,</span>发送带宽比<span style="letter-spacing:1.0px">(%)</span><span style="letter-spacing:1.0px">=</span><b style="color:#fff;-webkit-text-stroke:0.4px #fff"><span style="letter-spacing:2.4px">0.467</span></b><span style="letter-spacing:1.0px">,</span>发送速率<span style="letter-spacing:1.0px">(Kbit/s)</span><span style="letter-spacing:1.0px">=</span><b style="color:#fff;-webkit-text-stroke:0.4px #fff"><span style="letter-spacing:2.4px">467.11</span></b><span style="letter-spacing:1.0px">,</span>输入丢包率<span style="letter-spacing:1.0px">(%)</span><span style="letter-spacing:1.0px">=</span><b style="color:#fff;-webkit-text-stroke:0.4px #fff"><span style="letter-spacing:2.4px">0.0</span></b><span style="letter-spacing:1.0px">,</span>输出丢包率<span style="letter-spacing:1.0px">(%)</span><span style="letter-spacing:1.0px">=</span><b style="color:#fff;-webkit-text-stroke:0.4px #fff"><span style="letter-spacing:2.4px">0.0</span></b></div><div class="a t" style="left:1643px;top:184px;font-size:12px;color:#fff;"><span style="letter-spacing:1.2px">09-26 17:30:04 (3</span>分钟前<span style="letter-spacing:1.2px">)</span></div><div class="a" style="left:279px;top:202px;width:1601px;height:23px;background:#ffffff"></div><svg class="a" style="left:282px;top:206px" width="15" height="15" viewBox="0 0 15 15"><rect x="0.75" y="0.75" width="13.5" height="13.5" fill="#fff" stroke="#a0a0a0" stroke-width="1.5"/></svg><svg class="a" style="left:303px;top:206px" width="15" height="15" viewBox="0 0 16 16"><defs><radialGradient id="g5" cx="0.45" cy="0.3" r="0.75"><stop offset="0" stop-color="#d6ff9a"/><stop offset="0.55" stop-color="#5cc02a"/><stop offset="1" stop-color="#2f8a12"/></radialGradient></defs><circle cx="8" cy="8" r="7.6" fill="url(#g5)"/><ellipse cx="7.5" cy="4.6" rx="4.2" ry="2.6" fill="#fff" opacity="0.45"/></svg><div class="a t" style="left:331px;top:207px;font-size:12px;color:#444;"><span style="letter-spacing:1.0px">Ping</span></div><div class="a t" style="left:652px;top:207px;font-size:12px;color:#444;white-space:nowrap;">包成功率<span style="letter-spacing:1.0px;color:#5a5a5a">(%)</span><span style="letter-spacing:1.0px;color:#5a5a5a">=</span><b style="color:#1f4f8f;-webkit-text-stroke:0.4px #1f4f8f"><span style="letter-spacing:2.4px">100</span></b><span style="letter-spacing:1.0px;color:#5a5a5a">,</span>往返时间<span style="letter-spacing:1.0px;color:#5a5a5a">(ms)</span><span style="letter-spacing:1.0px;color:#5a5a5a">=</span><b style="color:#1f4f8f;-webkit-text-stroke:0.4px #1f4f8f"><span style="letter-spacing:2.4px">15.68</span></b></div><div class="a t" style="left:1643px;top:207px;font-size:12px;color:#444;"><span style="letter-spacing:1.2px">09-26 17:32:02 (1</span>分钟前<span style="letter-spacing:1.2px">)</span></div><div class="a" style="left:279px;top:225px;width:1601px;height:23px;background:#f2f2f2"></div><svg class="a" style="left:282px;top:229px" width="15" height="15" viewBox="0 0 15 15"><rect x="0.75" y="0.75" width="13.5" height="13.5" fill="#fff" stroke="#a0a0a0" stroke-width="1.5"/></svg><svg class="a" style="left:303px;top:229px" width="15" height="15" viewBox="0 0 16 16"><defs><radialGradient id="g6" cx="0.45" cy="0.3" r="0.75"><stop offset="0" stop-color="#d6ff9a"/><stop offset="0.55" stop-color="#5cc02a"/><stop offset="1" stop-color="#2f8a12"/></radialGradient></defs><circle cx="8" cy="8" r="7.6" fill="url(#g6)"/><ellipse cx="7.5" cy="4.6" rx="4.2" ry="2.6" fill="#fff" opacity="0.45"/></svg><div class="a t" style="left:331px;top:230px;font-size:12px;color:#444;">网络接口<span style="letter-spacing:1.0px">:Ethernet0/6</span></div><div class="a t" style="left:652px;top:230px;font-size:12px;color:#444;white-space:nowrap;">接口状态<span style="letter-spacing:1.0px;color:#5a5a5a">=</span><b style="color:#1f4f8f;-webkit-text-stroke:0.4px #1f4f8f"><span style="letter-spacing:2.4px">up</span></b><span style="letter-spacing:1.0px;color:#5a5a5a">,</span>接收带宽比<span style="letter-spacing:1.0px;color:#5a5a5a">(%)</span><span style="letter-spacing:1.0px;color:#5a5a5a">=</span><b style="color:#1f4f8f;-webkit-text-stroke:0.4px #1f4f8f"><span style="letter-spacing:2.4px">66.105</span></b><span style="letter-spacing:1.0px;color:#5a5a5a">,</span>接收速率<span style="letter-spacing:1.0px;color:#5a5a5a">(Kbit/s)</span><span style="letter-spacing:1.0px;color:#5a5a5a">=</span><b style="color:#1f4f8f;-webkit-text-stroke:0.4px #1f4f8f"><span style="letter-spacing:2.4px">66104.77</span></b><span style="letter-spacing:1.0px;color:#5a5a5a">,</span>发送带宽比<span style="letter-spacing:1.0px;color:#5a5a5a">(%)</span><span style="letter-spacing:1.0px;color:#5a5a5a">=</span><b style="color:#1f4f8f;-webkit-text-stroke:0.4px #1f4f8f"><span style="letter-spacing:2.4px">36.416</span></b><span style="letter-spacing:1.0px;color:#5a5a5a">,</span>发送速率<span style="letter-spacing:1.0px;color:#5a5a5a">(Kbit/s)</span><span style="letter-spacing:1.0px;color:#5a5a5a">=</span><b style="color:#1f4f8f;-webkit-text-stroke:0.4px #1f4f8f"><span style="letter-spacing:2.4px">36415.5</span></b><span style="letter-spacing:1.0px;color:#5a5a5a">,</span>输入丢包率<span style="letter-spacing:1.0px;color:#5a5a5a">(%)</span><span style="letter-spacing:1.0px;color:#5a5a5a">=</span><b style="color:#1f4f8f;-webkit-text-stroke:0.4px #1f4f8f"><span style="letter-spacing:2.4px">0.0</span></b><span style="letter-spacing:1.0px;color:#5a5a5a">,</span>输出丢包率<span style="letter-spacing:1.0px;color:#5a5a5a">(%)</span><span style="letter-spacing:1.0px;color:#5a5a5a">=</span><b style="color:#1f4f8f;-webkit-text-stroke:0.4px #1f4f8f"><span style="letter-spacing:2.4px">0.0</span></b></div><div class="a t" style="left:1643px;top:230px;font-size:12px;color:#444;"><span style="letter-spacing:1.2px">09-26 17:30:04 (3</span>分钟前<span style="letter-spacing:1.2px">)</span></div><div class="a" style="left:279px;top:248px;width:1601px;height:23px;background:#ffffff"></div><svg class="a" style="left:282px;top:252px" width="15" height="15" viewBox="0 0 15 15"><rect x="0.75" y="0.75" width="13.5" height="13.5" fill="#fff" stroke="#a0a0a0" stroke-width="1.5"/></svg><svg class="a" style="left:303px;top:252px" width="15" height="15" viewBox="0 0 16 16"><defs><radialGradient id="g7" cx="0.45" cy="0.3" r="0.75"><stop offset="0" stop-color="#d6ff9a"/><stop offset="0.55" stop-color="#5cc02a"/><stop offset="1" stop-color="#2f8a12"/></radialGradient></defs><circle cx="8" cy="8" r="7.6" fill="url(#g7)"/><ellipse cx="7.5" cy="4.6" rx="4.2" ry="2.6" fill="#fff" opacity="0.45"/></svg><div class="a t" style="left:331px;top:253px;font-size:12px;color:#444;">网络接口<span style="letter-spacing:1.0px">:Ethernet0/13</span></div><div class="a t" style="left:652px;top:253px;font-size:12px;color:#444;white-space:nowrap;">接口状态<span style="letter-spacing:1.0px;color:#5a5a5a">=</span><b style="color:#1f4f8f;-webkit-text-stroke:0.4px #1f4f8f"><span style="letter-spacing:2.4px">up</span></b><span style="letter-spacing:1.0px;color:#5a5a5a">,</span>接收带宽比<span style="letter-spacing:1.0px;color:#5a5a5a">(%)</span><span style="letter-spacing:1.0px;color:#5a5a5a">=</span><b style="color:#1f4f8f;-webkit-text-stroke:0.4px #1f4f8f"><span style="letter-spacing:2.4px">0.051</span></b><span style="letter-spacing:1.0px;color:#5a5a5a">,</span>接收速率<span style="letter-spacing:1.0px;color:#5a5a5a">(Kbit/s)</span><span style="letter-spacing:1.0px;color:#5a5a5a">=</span><b style="color:#1f4f8f;-webkit-text-stroke:0.4px #1f4f8f"><span style="letter-spacing:2.4px">51.19</span></b><span style="letter-spacing:1.0px;color:#5a5a5a">,</span>发送带宽比<span style="letter-spacing:1.0px;color:#5a5a5a">(%)</span><span style="letter-spacing:1.0px;color:#5a5a5a">=</span><b style="color:#1f4f8f;-webkit-text-stroke:0.4px #1f4f8f"><span style="letter-spacing:2.4px">0.579</span></b><span style="letter-spacing:1.0px;color:#5a5a5a">,</span>发送速率<span style="letter-spacing:1.0px;color:#5a5a5a">(Kbit/s)</span><span style="letter-spacing:1.0px;color:#5a5a5a">=</span><b style="color:#1f4f8f;-webkit-text-stroke:0.4px #1f4f8f"><span style="letter-spacing:2.4px">578.52</span></b><span style="letter-spacing:1.0px;color:#5a5a5a">,</span>输入丢包率<span style="letter-spacing:1.0px;color:#5a5a5a">(%)</span><span style="letter-spacing:1.0px;color:#5a5a5a">=</span><b style="color:#1f4f8f;-webkit-text-stroke:0.4px #1f4f8f"><span style="letter-spacing:2.4px">0.0</span></b><span style="letter-spacing:1.0px;color:#5a5a5a">,</span>输出丢包率<span style="letter-spacing:1.0px;color:#5a5a5a">(%)</span><span style="letter-spacing:1.0px;color:#5a5a5a">=</span><b style="color:#1f4f8f;-webkit-text-stroke:0.4px #1f4f8f"><span style="letter-spacing:2.4px">0.0</span></b></div><div class="a t" style="left:1643px;top:253px;font-size:12px;color:#444;"><span style="letter-spacing:1.2px">09-26 17:30:04 (3</span>分钟前<span style="letter-spacing:1.2px">)</span></div><div class="a" style="left:279px;top:271px;width:1601px;height:23px;background:#f2f2f2"></div><svg class="a" style="left:282px;top:275px" width="15" height="15" viewBox="0 0 15 15"><rect x="0.75" y="0.75" width="13.5" height="13.5" fill="#fff" stroke="#a0a0a0" stroke-width="1.5"/></svg><svg class="a" style="left:303px;top:275px" width="15" height="15" viewBox="0 0 16 16"><defs><radialGradient id="g8" cx="0.45" cy="0.3" r="0.75"><stop offset="0" stop-color="#d6ff9a"/><stop offset="0.55" stop-color="#5cc02a"/><stop offset="1" stop-color="#2f8a12"/></radialGradient></defs><circle cx="8" cy="8" r="7.6" fill="url(#g8)"/><ellipse cx="7.5" cy="4.6" rx="4.2" ry="2.6" fill="#fff" opacity="0.45"/></svg><div class="a t" style="left:331px;top:276px;font-size:12px;color:#444;">网络接口<span style="letter-spacing:1.0px">:Ethernet0/21</span></div><div class="a t" style="left:652px;top:276px;font-size:12px;color:#444;white-space:nowrap;">接口状态<span style="letter-spacing:1.0px;color:#5a5a5a">=</span><b style="color:#1f4f8f;-webkit-text-stroke:0.4px #1f4f8f"><span style="letter-spacing:2.4px">up</span></b><span style="letter-spacing:1.0px;color:#5a5a5a">,</span>接收带宽比<span style="letter-spacing:1.0px;color:#5a5a5a">(%)</span><span style="letter-spacing:1.0px;color:#5a5a5a">=</span><b style="color:#1f4f8f;-webkit-text-stroke:0.4px #1f4f8f"><span style="letter-spacing:2.4px">0.006</span></b><span style="letter-spacing:1.0px;color:#5a5a5a">,</span>接收速率<span style="letter-spacing:1.0px;color:#5a5a5a">(Kbit/s)</span><span style="letter-spacing:1.0px;color:#5a5a5a">=</span><b style="color:#1f4f8f;-webkit-text-stroke:0.4px #1f4f8f"><span style="letter-spacing:2.4px">6.24</span></b><span style="letter-spacing:1.0px;color:#5a5a5a">,</span>发送带宽比<span style="letter-spacing:1.0px;color:#5a5a5a">(%)</span><span style="letter-spacing:1.0px;color:#5a5a5a">=</span><b style="color:#1f4f8f;-webkit-text-stroke:0.4px #1f4f8f"><span style="letter-spacing:2.4px">0.000</span></b><span style="letter-spacing:1.0px;color:#5a5a5a">,</span>发送速率<span style="letter-spacing:1.0px;color:#5a5a5a">(Kbit/s)</span><span style="letter-spacing:1.0px;color:#5a5a5a">=</span><b style="color:#1f4f8f;-webkit-text-stroke:0.4px #1f4f8f"><span style="letter-spacing:2.4px">0.02</span></b><span style="letter-spacing:1.0px;color:#5a5a5a">,</span>输入丢包率<span style="letter-spacing:1.0px;color:#5a5a5a">(%)</span><span style="letter-spacing:1.0px;color:#5a5a5a">=</span><b style="color:#1f4f8f;-webkit-text-stroke:0.4px #1f4f8f"><span style="letter-spacing:2.4px">0.0</span></b><span style="letter-spacing:1.0px;color:#5a5a5a">,</span>输出丢包率<span style="letter-spacing:1.0px;color:#5a5a5a">(%)</span><span style="letter-spacing:1.0px;color:#5a5a5a">=</span><b style="color:#1f4f8f;-webkit-text-stroke:0.4px #1f4f8f"><span style="letter-spacing:2.4px">0.0</span></b></div><div class="a t" style="left:1643px;top:276px;font-size:12px;color:#444;"><span style="letter-spacing:1.2px">09-26 17:30:04 (3</span>分钟前<span style="letter-spacing:1.2px">)</span></div><div class="a" style="left:279px;top:294px;width:1601px;height:23px;background:#ffffff"></div><svg class="a" style="left:282px;top:298px" width="15" height="15" viewBox="0 0 15 15"><rect x="0.75" y="0.75" width="13.5" height="13.5" fill="#fff" stroke="#a0a0a0" stroke-width="1.5"/></svg><svg class="a" style="left:303px;top:298px" width="15" height="15" viewBox="0 0 16 16"><defs><radialGradient id="g9" cx="0.45" cy="0.3" r="0.75"><stop offset="0" stop-color="#d6ff9a"/><stop offset="0.55" stop-color="#5cc02a"/><stop offset="1" stop-color="#2f8a12"/></radialGradient></defs><circle cx="8" cy="8" r="7.6" fill="url(#g9)"/><ellipse cx="7.5" cy="4.6" rx="4.2" ry="2.6" fill="#fff" opacity="0.45"/></svg><div class="a t" style="left:331px;top:299px;font-size:12px;color:#444;">网络接口<span style="letter-spacing:1.0px">:Ethernet0/4</span></div><div class="a t" style="left:652px;top:299px;font-size:12px;color:#444;white-space:nowrap;">接口状态<span style="letter-spacing:1.0px;color:#5a5a5a">=</span><b style="color:#1f4f8f;-webkit-text-stroke:0.4px #1f4f8f"><span style="letter-spacing:2.4px">up</span></b><span style="letter-spacing:1.0px;color:#5a5a5a">,</span>接收带宽比<span style="letter-spacing:1.0px;color:#5a5a5a">(%)</span><span style="letter-spacing:1.0px;color:#5a5a5a">=</span><b style="color:#1f4f8f;-webkit-text-stroke:0.4px #1f4f8f"><span style="letter-spacing:2.4px">0.123</span></b><span style="letter-spacing:1.0px;color:#5a5a5a">,</span>接收速率<span style="letter-spacing:1.0px;color:#5a5a5a">(Kbit/s)</span><span style="letter-spacing:1.0px;color:#5a5a5a">=</span><b style="color:#1f4f8f;-webkit-text-stroke:0.4px #1f4f8f"><span style="letter-spacing:2.4px">122.62</span></b><span style="letter-spacing:1.0px;color:#5a5a5a">,</span>发送带宽比<span style="letter-spacing:1.0px;color:#5a5a5a">(%)</span><span style="letter-spacing:1.0px;color:#5a5a5a">=</span><b style="color:#1f4f8f;-webkit-text-stroke:0.4px #1f4f8f"><span style="letter-spacing:2.4px">0.157</span></b><span style="letter-spacing:1.0px;color:#5a5a5a">,</span>发送速率<span style="letter-spacing:1.0px;color:#5a5a5a">(Kbit/s)</span><span style="letter-spacing:1.0px;color:#5a5a5a">=</span><b style="color:#1f4f8f;-webkit-text-stroke:0.4px #1f4f8f"><span style="letter-spacing:2.4px">156.64</span></b><span style="letter-spacing:1.0px;color:#5a5a5a">,</span>输入丢包率<span style="letter-spacing:1.0px;color:#5a5a5a">(%)</span><span style="letter-spacing:1.0px;color:#5a5a5a">=</span><b style="color:#1f4f8f;-webkit-text-stroke:0.4px #1f4f8f"><span style="letter-spacing:2.4px">0.0</span></b><span style="letter-spacing:1.0px;color:#5a5a5a">,</span>输出丢包率<span style="letter-spacing:1.0px;color:#5a5a5a">(%)</span><span style="letter-spacing:1.0px;color:#5a5a5a">=</span><b style="color:#1f4f8f;-webkit-text-stroke:0.4px #1f4f8f"><span style="letter-spacing:2.4px">0.0</span></b></div><div class="a t" style="left:1643px;top:299px;font-size:12px;color:#444;"><span style="letter-spacing:1.2px">09-26 17:30:08 (3</span>分钟前<span style="letter-spacing:1.2px">)</span></div><div class="a" style="left:279px;top:317px;width:1601px;height:23px;background:#f2f2f2"></div><svg class="a" style="left:282px;top:321px" width="15" height="15" viewBox="0 0 15 15"><rect x="0.75" y="0.75" width="13.5" height="13.5" fill="#fff" stroke="#a0a0a0" stroke-width="1.5"/></svg><svg class="a" style="left:303px;top:321px" width="15" height="15" viewBox="0 0 16 16"><defs><radialGradient id="g10" cx="0.45" cy="0.3" r="0.75"><stop offset="0" stop-color="#d6ff9a"/><stop offset="0.55" stop-color="#5cc02a"/><stop offset="1" stop-color="#2f8a12"/></radialGradient></defs><circle cx="8" cy="8" r="7.6" fill="url(#g10)"/><ellipse cx="7.5" cy="4.6" rx="4.2" ry="2.6" fill="#fff" opacity="0.45"/></svg><div class="a t" style="left:331px;top:322px;font-size:12px;color:#444;">网络接口<span style="letter-spacing:1.0px">:Vlan-interface10</span></div><div class="a t" style="left:652px;top:322px;font-size:12px;color:#444;white-space:nowrap;">接口状态<span style="letter-spacing:1.0px;color:#5a5a5a">=</span><b style="color:#1f4f8f;-webkit-text-stroke:0.4px #1f4f8f"><span style="letter-spacing:2.4px">up</span></b><span style="letter-spacing:1.0px;color:#5a5a5a">,</span>接收带宽比<span style="letter-spacing:1.0px;color:#5a5a5a">(%)</span><span style="letter-spacing:1.0px;color:#5a5a5a">=</span><b style="color:#1f4f8f;-webkit-text-stroke:0.4px #1f4f8f"><span style="letter-spacing:2.4px">0.000</span></b><span style="letter-spacing:1.0px;color:#5a5a5a">,</span>接收速率<span style="letter-spacing:1.0px;color:#5a5a5a">(Kbit/s)</span><span style="letter-spacing:1.0px;color:#5a5a5a">=</span><b style="color:#1f4f8f;-webkit-text-stroke:0.4px #1f4f8f"><span style="letter-spacing:2.4px">0.0</span></b><span style="letter-spacing:1.0px;color:#5a5a5a">,</span>发送带宽比<span style="letter-spacing:1.0px;color:#5a5a5a">(%)</span><span style="letter-spacing:1.0px;color:#5a5a5a">=</span><b style="color:#1f4f8f;-webkit-text-stroke:0.4px #1f4f8f"><span style="letter-spacing:2.4px">0.000</span></b><span style="letter-spacing:1.0px;color:#5a5a5a">,</span>发送速率<span style="letter-spacing:1.0px;color:#5a5a5a">(Kbit/s)</span><span style="letter-spacing:1.0px;color:#5a5a5a">=</span><b style="color:#1f4f8f;-webkit-text-stroke:0.4px #1f4f8f"><span style="letter-spacing:2.4px">0.0</span></b><span style="letter-spacing:1.0px;color:#5a5a5a">,</span>输入丢包率<span style="letter-spacing:1.0px;color:#5a5a5a">(%)</span><span style="letter-spacing:1.0px;color:#5a5a5a">=</span><b style="color:#1f4f8f;-webkit-text-stroke:0.4px #1f4f8f"><span style="letter-spacing:2.4px">0.0</span></b><span style="letter-spacing:1.0px;color:#5a5a5a">,</span>输出丢包率<span style="letter-spacing:1.0px;color:#5a5a5a">(%)</span><span style="letter-spacing:1.0px;color:#5a5a5a">=</span><b style="color:#1f4f8f;-webkit-text-stroke:0.4px #1f4f8f"><span style="letter-spacing:2.4px">0.0</span></b></div><div class="a t" style="left:1643px;top:322px;font-size:12px;color:#444;"><span style="letter-spacing:1.2px">09-26 17:30:04 (3</span>分钟前<span style="letter-spacing:1.2px">)</span></div><div class="a" style="left:279px;top:340px;width:1601px;height:23px;background:#ffffff"></div><svg class="a" style="left:282px;top:344px" width="15" height="15" viewBox="0 0 15 15"><rect x="0.75" y="0.75" width="13.5" height="13.5" fill="#fff" stroke="#a0a0a0" stroke-width="1.5"/></svg><svg class="a" style="left:303px;top:344px" width="15" height="15" viewBox="0 0 16 16"><defs><radialGradient id="g11" cx="0.45" cy="0.3" r="0.75"><stop offset="0" stop-color="#d6ff9a"/><stop offset="0.55" stop-color="#5cc02a"/><stop offset="1" stop-color="#2f8a12"/></radialGradient></defs><circle cx="8" cy="8" r="7.6" fill="url(#g11)"/><ellipse cx="7.5" cy="4.6" rx="4.2" ry="2.6" fill="#fff" opacity="0.45"/></svg><div class="a t" style="left:331px;top:345px;font-size:12px;color:#444;">网络接口<span style="letter-spacing:1.0px">:NULL0</span></div><div class="a t" style="left:652px;top:345px;font-size:12px;color:#444;white-space:nowrap;">接口状态<span style="letter-spacing:1.0px;color:#5a5a5a">=</span><b style="color:#1f4f8f;-webkit-text-stroke:0.4px #1f4f8f"><span style="letter-spacing:2.4px">up</span></b><span style="letter-spacing:1.0px;color:#5a5a5a">,</span>接收带宽比<span style="letter-spacing:1.0px;color:#5a5a5a">(%)</span><span style="letter-spacing:1.0px;color:#5a5a5a">=</span><b style="color:#1f4f8f;-webkit-text-stroke:0.4px #1f4f8f"><span style="letter-spacing:2.4px">0.000</span></b><span style="letter-spacing:1.0px;color:#5a5a5a">,</span>接收速率<span style="letter-spacing:1.0px;color:#5a5a5a">(Kbit/s)</span><span style="letter-spacing:1.0px;color:#5a5a5a">=</span><b style="color:#1f4f8f;-webkit-text-stroke:0.4px #1f4f8f"><span style="letter-spacing:2.4px">0.0</span></b><span style="letter-spacing:1.0px;color:#5a5a5a">,</span>发送带宽比<span style="letter-spacing:1.0px;color:#5a5a5a">(%)</span><span style="letter-spacing:1.0px;color:#5a5a5a">=</span><b style="color:#1f4f8f;-webkit-text-stroke:0.4px #1f4f8f"><span style="letter-spacing:2.4px">0.000</span></b><span style="letter-spacing:1.0px;color:#5a5a5a">,</span>发送速率<span style="letter-spacing:1.0px;color:#5a5a5a">(Kbit/s)</span><span style="letter-spacing:1.0px;color:#5a5a5a">=</span><b style="color:#1f4f8f;-webkit-text-stroke:0.4px #1f4f8f"><span style="letter-spacing:2.4px">0.0</span></b><span style="letter-spacing:1.0px;color:#5a5a5a">,</span>输入丢包率<span style="letter-spacing:1.0px;color:#5a5a5a">(%)</span><span style="letter-spacing:1.0px;color:#5a5a5a">=</span><b style="color:#1f4f8f;-webkit-text-stroke:0.4px #1f4f8f"><span style="letter-spacing:2.4px">0.0</span></b><span style="letter-spacing:1.0px;color:#5a5a5a">,</span>输出丢包率<span style="letter-spacing:1.0px;color:#5a5a5a">(%)</span><span style="letter-spacing:1.0px;color:#5a5a5a">=</span><b style="color:#1f4f8f;-webkit-text-stroke:0.4px #1f4f8f"><span style="letter-spacing:2.4px">0.0</span></b></div><div class="a t" style="left:1643px;top:345px;font-size:12px;color:#444;"><span style="letter-spacing:1.2px">09-26 17:30:04 (3</span>分钟前<span style="letter-spacing:1.2px">)</span></div><div class="a" style="left:279px;top:363px;width:1601px;height:23px;background:#f2f2f2"></div><svg class="a" style="left:282px;top:367px" width="15" height="15" viewBox="0 0 15 15"><rect x="0.75" y="0.75" width="13.5" height="13.5" fill="#fff" stroke="#a0a0a0" stroke-width="1.5"/></svg><svg class="a" style="left:303px;top:367px" width="15" height="15" viewBox="0 0 16 16"><defs><radialGradient id="g12" cx="0.45" cy="0.3" r="0.75"><stop offset="0" stop-color="#d6ff9a"/><stop offset="0.55" stop-color="#5cc02a"/><stop offset="1" stop-color="#2f8a12"/></radialGradient></defs><circle cx="8" cy="8" r="7.6" fill="url(#g12)"/><ellipse cx="7.5" cy="4.6" rx="4.2" ry="2.6" fill="#fff" opacity="0.45"/></svg><div class="a t" style="left:331px;top:368px;font-size:12px;color:#444;">网络设备<span style="letter-spacing:1.0px">_CPU</span></div><div class="a t" style="left:652px;top:368px;font-size:12px;color:#444;white-space:nowrap;"><span style="letter-spacing:1.0px;color:#5a5a5a">cpu</span>使用率<span style="letter-spacing:1.0px;color:#5a5a5a">(%)</span><span style="letter-spacing:1.0px;color:#5a5a5a">=</span><b style="color:#1f4f8f;-webkit-text-stroke:0.4px #1f4f8f"><span style="letter-spacing:2.4px">18</span></b></div><div class="a t" style="left:1643px;top:368px;font-size:12px;color:#444;"><span style="letter-spacing:1.2px">09-26 17:30:00 (3</span>分钟前<span style="letter-spacing:1.2px">)</span></div><div class="a" style="left:279px;top:386px;width:1601px;height:23px;background:#ffffff"></div><svg class="a" style="left:282px;top:390px" width="15" height="15" viewBox="0 0 15 15"><rect x="0.75" y="0.75" width="13.5" height="13.5" fill="#fff" stroke="#a0a0a0" stroke-width="1.5"/></svg><svg class="a" style="left:303px;top:390px" width="15" height="15" viewBox="0 0 16 16"><defs><radialGradient id="g13" cx="0.45" cy="0.3" r="0.75"><stop offset="0" stop-color="#d6ff9a"/><stop offset="0.55" stop-color="#5cc02a"/><stop offset="1" stop-color="#2f8a12"/></radialGradient></defs><circle cx="8" cy="8" r="7.6" fill="url(#g13)"/><ellipse cx="7.5" cy="4.6" rx="4.2" ry="2.6" fill="#fff" opacity="0.45"/></svg><div class="a t" style="left:331px;top:391px;font-size:12px;color:#444;">网络接口<span style="letter-spacing:1.0px">:Ethernet0/7</span></div><div class="a t" style="left:652px;top:391px;font-size:12px;color:#444;white-space:nowrap;">接口状态<span style="letter-spacing:1.0px;color:#5a5a5a">=</span><b style="color:#1f4f8f;-webkit-text-stroke:0.4px #1f4f8f"><span style="letter-spacing:2.4px">up</span></b><span style="letter-spacing:1.0px;color:#5a5a5a">,</span>接收带宽比<span style="letter-spacing:1.0px;color:#5a5a5a">(%)</span><span style="letter-spacing:1.0px;color:#5a5a5a">=</span><b style="color:#1f4f8f;-webkit-text-stroke:0.4px #1f4f8f"><span style="letter-spacing:2.4px">0.224</span></b><span style="letter-spacing:1.0px;color:#5a5a5a">,</span>接收速率<span style="letter-spacing:1.0px;color:#5a5a5a">(Kbit/s)</span><span style="letter-spacing:1.0px;color:#5a5a5a">=</span><b style="color:#1f4f8f;-webkit-text-stroke:0.4px #1f4f8f"><span style="letter-spacing:2.4px">224.41</span></b><span style="letter-spacing:1.0px;color:#5a5a5a">,</span>发送带宽比<span style="letter-spacing:1.0px;color:#5a5a5a">(%)</span><span style="letter-spacing:1.0px;color:#5a5a5a">=</span><b style="color:#1f4f8f;-webkit-text-stroke:0.4px #1f4f8f"><span style="letter-spacing:2.4px">0.285</span></b><span style="letter-spacing:1.0px;color:#5a5a5a">,</span>发送速率<span style="letter-spacing:1.0px;color:#5a5a5a">(Kbit/s)</span><span style="letter-spacing:1.0px;color:#5a5a5a">=</span><b style="color:#1f4f8f;-webkit-text-stroke:0.4px #1f4f8f"><span style="letter-spacing:2.4px">285.1</span></b><span style="letter-spacing:1.0px;color:#5a5a5a">,</span>输入丢包率<span style="letter-spacing:1.0px;color:#5a5a5a">(%)</span><span style="letter-spacing:1.0px;color:#5a5a5a">=</span><b style="color:#1f4f8f;-webkit-text-stroke:0.4px #1f4f8f"><span style="letter-spacing:2.4px">0.0</span></b><span style="letter-spacing:1.0px;color:#5a5a5a">,</span>输出丢包率<span style="letter-spacing:1.0px;color:#5a5a5a">(%)</span><span style="letter-spacing:1.0px;color:#5a5a5a">=</span><b style="color:#1f4f8f;-webkit-text-stroke:0.4px #1f4f8f"><span style="letter-spacing:2.4px">0.0</span></b></div><div class="a t" style="left:1643px;top:391px;font-size:12px;color:#444;"><span style="letter-spacing:1.2px">09-26 17:30:04 (3</span>分钟前<span style="letter-spacing:1.2px">)</span></div><div class="a" style="left:279px;top:409px;width:1601px;height:18px;background:#f2f2f2"></div><div class="a" style="left:279px;top:409px;width:1601px;height:18px;overflow:hidden"><svg class="a" style="left:3px;top:4px" width="15" height="15" viewBox="0 0 15 15"><rect x="0.75" y="0.75" width="13.5" height="13.5" fill="#fff" stroke="#a0a0a0" stroke-width="1.5"/></svg><svg class="a" style="left:24px;top:4px" width="15" height="15" viewBox="0 0 16 16"><defs><radialGradient id="g14" cx="0.45" cy="0.3" r="0.75"><stop offset="0" stop-color="#d6ff9a"/><stop offset="0.55" stop-color="#5cc02a"/><stop offset="1" stop-color="#2f8a12"/></radialGradient></defs><circle cx="8" cy="8" r="7.6" fill="url(#g14)"/><ellipse cx="7.5" cy="4.6" rx="4.2" ry="2.6" fill="#fff" opacity="0.45"/></svg></div><div class="a t" style="left:331px;top:414px;font-size:12px;color:#444;height:14px;overflow:hidden">网络接口<span style="letter-spacing:1.0px">:Ethernet0/16</span></div><div class="a t" style="left:652px;top:414px;font-size:12px;color:#444;white-space:nowrap;height:14px;overflow:hidden">接口状态<span style="letter-spacing:1.0px;color:#5a5a5a">=</span><b style="color:#1f4f8f;-webkit-text-stroke:0.4px #1f4f8f"><span style="letter-spacing:2.4px">up</span></b><span style="letter-spacing:1.0px;color:#5a5a5a">,</span>接收带宽比<span style="letter-spacing:1.0px;color:#5a5a5a">(%)</span><span style="letter-spacing:1.0px;color:#5a5a5a">=</span><b style="color:#1f4f8f;-webkit-text-stroke:0.4px #1f4f8f"><span style="letter-spacing:2.4px">0.395</span></b><span style="letter-spacing:1.0px;color:#5a5a5a">,</span>接收速率<span style="letter-spacing:1.0px;color:#5a5a5a">(Kbit/s)</span><span style="letter-spacing:1.0px;color:#5a5a5a">=</span><b style="color:#1f4f8f;-webkit-text-stroke:0.4px #1f4f8f"><span style="letter-spacing:2.4px">394.87</span></b><span style="letter-spacing:1.0px;color:#5a5a5a">,</span>发送带宽比<span style="letter-spacing:1.0px;color:#5a5a5a">(%)</span><span style="letter-spacing:1.0px;color:#5a5a5a">=</span><b style="color:#1f4f8f;-webkit-text-stroke:0.4px #1f4f8f"><span style="letter-spacing:2.4px">0.418</span></b><span style="letter-spacing:1.0px;color:#5a5a5a">,</span>发送速率<span style="letter-spacing:1.0px;color:#5a5a5a">(Kbit/s)</span><span style="letter-spacing:1.0px;color:#5a5a5a">=</span><b style="color:#1f4f8f;-webkit-text-stroke:0.4px #1f4f8f"><span style="letter-spacing:2.4px">418.22</span></b><span style="letter-spacing:1.0px;color:#5a5a5a">,</span>输入丢包率<span style="letter-spacing:1.0px;color:#5a5a5a">(%)</span><span style="letter-spacing:1.0px;color:#5a5a5a">=</span><b style="color:#1f4f8f;-webkit-text-stroke:0.4px #1f4f8f"><span style="letter-spacing:2.4px">0.0</span></b><span style="letter-spacing:1.0px;color:#5a5a5a">,</span>输出丢包率<span style="letter-spacing:1.0px;color:#5a5a5a">(%)</span><span style="letter-spacing:1.0px;color:#5a5a5a">=</span><b style="color:#1f4f8f;-webkit-text-stroke:0.4px #1f4f8f"><span style="letter-spacing:2.4px">0.0</span></b></div><div class="a t" style="left:1643px;top:414px;font-size:12px;color:#444;height:13px;overflow:hidden"><span style="letter-spacing:1.2px">09-26 17:30:05 (3</span>分钟前<span style="letter-spacing:1.2px">)</span></div><div class="a" style="left:1881px;top:179px;width:10px;height:248px;background:#efefef"></div><svg class="a" style="left:1881px;top:180px" width="10" height="8"><path d="M1.5 6.5 L5 2 L8.5 6.5 Z" fill="#666"/></svg><svg class="a" style="left:1881px;top:418px" width="10" height="8"><path d="M1.5 1.5 L5 6 L8.5 1.5 Z" fill="#666"/></svg><div class="a" style="left:1881px;top:190px;width:9px;height:97px;box-sizing:border-box;border:1px solid #b8b8b8;border-radius:5px;background:repeating-linear-gradient(135deg,#e2e2e2 0 2px,#c8c8c8 2px 3px)"></div><div class="a" style="left:1080px;top:433px;width:2px;height:2px;background:#a0a0a0"></div><div class="a" style="left:1084px;top:433px;width:2px;height:2px;background:#a0a0a0"></div><div class="a" style="left:1088px;top:433px;width:2px;height:2px;background:#a0a0a0"></div><div class="a" style="left:267px;top:437px;width:1636px;height:24px;border-radius:8px 8px 0 0;background:linear-gradient(#8fb2e1 0%,#b9d0ef 35%,#e4edf9 70%,#ffffff 100%)"></div><div class="a t" style="left:274px;top:441px;font-size:12px;font-weight:bold;color:#5a7296">监测器概要</div><svg class="a" style="left:1648px;top:443px" width="17" height="16" viewBox="0 0 17 16"><path d="M1 5 L5 5 Q4 1 7 1 Q10 1 9 5 L12 5 L12 9 Q15 8 15 11 Q15 14 12 13 L12 15.5 L1 15.5 Z" fill="#f8c838" stroke="#d8a010" stroke-width="0.6"/><path d="M8 13 L15 5" stroke="#9a6ad0" stroke-width="2"/></svg><div class="a t" style="left:1668px;top:446px;font-size:12px;color:#222">编辑</div><svg class="a" style="left:1699px;top:443px" width="15" height="15" viewBox="0 0 16 16"><path d="M2.5 2.5 L13.5 13.5 M13.5 2.5 L2.5 13.5" stroke="#d81010" stroke-width="4.2" stroke-linecap="round"/><path d="M2.5 2.5 L13.5 13.5 M13.5 2.5 L2.5 13.5" stroke="#ff5a5a" stroke-width="1.2" stroke-linecap="round" opacity="0.6"/></svg><div class="a t" style="left:1717px;top:446px;font-size:12px;color:#222">删除</div><svg class="a" style="left:1749px;top:443px" width="16" height="16" viewBox="0 0 16 16"><rect x="0" y="0" width="16" height="16" rx="3" fill="#4cae22"/><rect x="1" y="1" width="14" height="7" rx="2" fill="#7fd04a" opacity="0.6"/><path d="M4 8.5 A4 4 0 0 1 11.5 6 L12.5 4.5 L13 9 L9 8.5 L10.3 7.2 A2.5 2.5 0 0 0 5.5 8.5 Z" fill="#fff"/><path d="M12 7.5 A4 4 0 0 1 4.5 10 L3.5 11.5 L3 7 L7 7.5 L5.7 8.8 A2.5 2.5 0 0 0 10.5 7.5 Z" fill="#fff"/></svg><div class="a t" style="left:1768px;top:446px;font-size:12px;color:#222">刷新</div><svg class="a" style="left:1800px;top:443px" width="15" height="16" viewBox="0 0 15 16"><path d="M0.5 0.5 L7 0.5 L9 2.5 L9 11 L0.5 11 Z" fill="#eef3fb" stroke="#8aa8d0"/><path d="M2 3 H7 M2 5 H7 M2 7 H7" stroke="#9ab"/><path d="M5.5 4.5 L12 4.5 L14.5 7 L14.5 15.5 L5.5 15.5 Z" fill="#dbe6f6" stroke="#6d8fc0"/><path d="M7 8 H13 M7 10 H13 M7 12 H13" stroke="#8ab"/></svg><div class="a t" style="left:1819px;top:446px;font-size:12px;color:#222">详细</div><svg class="a" style="left:1852px;top:443px" width="13" height="16" viewBox="0 0 13 16"><path d="M0.5 0.5 L9 0.5 L12.5 4 L12.5 15.5 L0.5 15.5 Z" fill="#fafafa" stroke="#777"/><path d="M2 4.5 H10.5 M2 6.5 H10.5 M2 8.5 H10.5 M2 10.5 H10.5 M2 12.5 H10.5" stroke="#a83040" stroke-width="1" shape-rendering="crispEdges"/></svg><div class="a t" style="left:1869px;top:446px;font-size:12px;color:#222">日志</div><svg class="a" style="left:283px;top:472px" width="16" height="16"><circle cx="8" cy="8" r="6.8" fill="#fff" stroke="#a0a0a0" stroke-width="1.2"/><circle cx="8" cy="8" r="3.6" fill="#7ac12a"/></svg><div class="a t" style="left:303px;top:472px;font-size:12px;color:#333">折线图</div><svg class="a" style="left:353px;top:472px" width="16" height="16"><circle cx="8" cy="8" r="6.8" fill="#fff" stroke="#a0a0a0" stroke-width="1.2"/></svg><div class="a t" style="left:373px;top:472px;font-size:12px;color:#333">面积图</div><div class="a" style="left:419px;top:468px;width:132px;height:23px;box-sizing:border-box;border:1px solid #bdbdbd;border-radius:2px;background:#fff"></div><div class="a" style="left:528px;top:469px;width:1px;height:21px;background:#cfcfcf"></div><div class="a" style="left:529px;top:469px;width:21px;height:21px;background:linear-gradient(#fafafa,#e8e8e8)"></div><svg class="a" style="left:534px;top:476px" width="10" height="6"><path d="M0.5 0.5 L9.5 0.5 L5 5.5 Z" fill="#666"/></svg><div class="a t" style="left:422px;top:472px;font-size:12px;color:#333">发送速率<span style="letter-spacing:0.85px">(Kbit/s)</span></div><svg class="a" style="left:0;top:0" width="1918" height="910" viewBox="0 0 1918 910"><path d="M330 521.3 H1616" stroke="#dcdcdc" stroke-width="1" stroke-dasharray="2.5,3.5"/><path d="M325 521.3 H330" stroke="#666" stroke-width="1"/><path d="M330 550.6 H1616" stroke="#dcdcdc" stroke-width="1" stroke-dasharray="2.5,3.5"/><path d="M325 550.6 H330" stroke="#666" stroke-width="1"/><path d="M330 580.0 H1616" stroke="#dcdcdc" stroke-width="1" stroke-dasharray="2.5,3.5"/><path d="M325 580.0 H330" stroke="#666" stroke-width="1"/><path d="M330 609.3 H1616" stroke="#dcdcdc" stroke-width="1" stroke-dasharray="2.5,3.5"/><path d="M325 609.3 H330" stroke="#666" stroke-width="1"/><path d="M330 638.7 H1616" stroke="#dcdcdc" stroke-width="1" stroke-dasharray="2.5,3.5"/><path d="M325 638.7 H330" stroke="#666" stroke-width="1"/><path d="M330 668.0 H1616" stroke="#dcdcdc" stroke-width="1" stroke-dasharray="2.5,3.5"/><path d="M325 668.0 H330" stroke="#666" stroke-width="1"/><path d="M330 697.4 H1616" stroke="#dcdcdc" stroke-width="1" stroke-dasharray="2.5,3.5"/><path d="M325 697.4 H330" stroke="#666" stroke-width="1"/><path d="M353.3 515 V714" stroke="#dcdcdc" stroke-width="1" stroke-dasharray="2.5,3.5"/><path d="M353.3 714 V719" stroke="#666" stroke-width="1"/><path d="M473.7 515 V714" stroke="#dcdcdc" stroke-width="1" stroke-dasharray="2.5,3.5"/><path d="M473.7 714 V719" stroke="#666" stroke-width="1"/><path d="M594.2 515 V714" stroke="#dcdcdc" stroke-width="1" stroke-dasharray="2.5,3.5"/><path d="M594.2 714 V719" stroke="#666" stroke-width="1"/><path d="M714.6 515 V714" stroke="#dcdcdc" stroke-width="1" stroke-dasharray="2.5,3.5"/><path d="M714.6 714 V719" stroke="#666" stroke-width="1"/><path d="M835.0 515 V714" stroke="#dcdcdc" stroke-width="1" stroke-dasharray="2.5,3.5"/><path d="M835.0 714 V719" stroke="#666" stroke-width="1"/><path d="M955.5 515 V714" stroke="#dcdcdc" stroke-width="1" stroke-dasharray="2.5,3.5"/><path d="M955.5 714 V719" stroke="#666" stroke-width="1"/><path d="M1075.9 515 V714" stroke="#dcdcdc" stroke-width="1" stroke-dasharray="2.5,3.5"/><path d="M1075.9 714 V719" stroke="#666" stroke-width="1"/><path d="M1196.3 515 V714" stroke="#dcdcdc" stroke-width="1" stroke-dasharray="2.5,3.5"/><path d="M1196.3 714 V719" stroke="#666" stroke-width="1"/><path d="M1316.7 515 V714" stroke="#dcdcdc" stroke-width="1" stroke-dasharray="2.5,3.5"/><path d="M1316.7 714 V719" stroke="#666" stroke-width="1"/><path d="M1437.2 515 V714" stroke="#dcdcdc" stroke-width="1" stroke-dasharray="2.5,3.5"/><path d="M1437.2 714 V719" stroke="#666" stroke-width="1"/><path d="M1557.6 515 V714" stroke="#dcdcdc" stroke-width="1" stroke-dasharray="2.5,3.5"/><path d="M1557.6 714 V719" stroke="#666" stroke-width="1"/><path d="M329.5 515 V714.5 H1619" fill="none" stroke="#6a6a6a" stroke-width="1.3"/><polyline points="353.3,572.3 594.2,540.1 714.6,671.9 835.0,677.4 955.5,698.9 1075.9,681.6 1196.3,591.8 1316.7,705.7 1437.2,700.6 1557.6,705.9" fill="none" stroke="#5f95d8" stroke-width="1.3"/><circle cx="353.3" cy="572.3" r="2.6" fill="#5f95d8"/><circle cx="594.2" cy="540.1" r="2.6" fill="#5f95d8"/><circle cx="714.6" cy="671.9" r="2.6" fill="#5f95d8"/><circle cx="835.0" cy="677.4" r="2.6" fill="#5f95d8"/><circle cx="955.5" cy="698.9" r="2.6" fill="#5f95d8"/><circle cx="1075.9" cy="681.6" r="2.6" fill="#5f95d8"/><circle cx="1196.3" cy="591.8" r="2.6" fill="#5f95d8"/><circle cx="1316.7" cy="705.7" r="2.6" fill="#5f95d8"/><circle cx="1437.2" cy="700.6" r="2.6" fill="#5f95d8"/><circle cx="1557.6" cy="705.9" r="2.6" fill="#5f95d8"/></svg><div class="a t" style="left:304px;top:515.3px;font-size:11px;color:#222;letter-spacing:0.6px">530</div><div class="a t" style="left:304px;top:544.65px;font-size:11px;color:#222;letter-spacing:0.6px">520</div><div class="a t" style="left:304px;top:574.0px;font-size:11px;color:#222;letter-spacing:0.6px">510</div><div class="a t" style="left:304px;top:603.3499999999999px;font-size:11px;color:#222;letter-spacing:0.6px">500</div><div class="a t" style="left:304px;top:632.6999999999999px;font-size:11px;color:#222;letter-spacing:0.6px">490</div><div class="a t" style="left:304px;top:662.05px;font-size:11px;color:#222;letter-spacing:0.6px">480</div><div class="a t" style="left:304px;top:691.4px;font-size:11px;color:#222;letter-spacing:0.6px">470</div><div class="a t" style="left:339.8px;top:718px;font-size:11px;color:#222;letter-spacing:0.6px">15:50</div><div class="a t" style="left:460.23px;top:718px;font-size:11px;color:#222;letter-spacing:0.6px">16:00</div><div class="a t" style="left:580.6600000000001px;top:718px;font-size:11px;color:#222;letter-spacing:0.6px">16:10</div><div class="a t" style="left:701.09px;top:718px;font-size:11px;color:#222;letter-spacing:0.6px">16:20</div><div class="a t" style="left:821.52px;top:718px;font-size:11px;color:#222;letter-spacing:0.6px">16:30</div><div class="a t" style="left:941.95px;top:718px;font-size:11px;color:#222;letter-spacing:0.6px">16:40</div><div class="a t" style="left:1062.38px;top:718px;font-size:11px;color:#222;letter-spacing:0.6px">16:50</div><div class="a t" style="left:1182.81px;top:718px;font-size:11px;color:#222;letter-spacing:0.6px">17:00</div><div class="a t" style="left:1303.24px;top:718px;font-size:11px;color:#222;letter-spacing:0.6px">17:10</div><div class="a t" style="left:1423.67px;top:718px;font-size:11px;color:#222;letter-spacing:0.6px">17:20</div><div class="a t" style="left:1544.1000000000001px;top:718px;font-size:11px;color:#222;letter-spacing:0.6px">17:30</div><div class="a t" style="left:303.6px;top:553.2px;width:100px;text-align:center;font-family:'Liberation Serif',serif;font-size:14px;color:#111;white-space:pre;letter-spacing:0.5px;-webkit-text-stroke:0.25px #111">512. 64</div><div class="a t" style="left:544.5px;top:521.0px;width:100px;text-align:center;font-family:'Liberation Serif',serif;font-size:14px;color:#111;white-space:pre;letter-spacing:0.5px;-webkit-text-stroke:0.25px #111">523. 6</div><div class="a t" style="left:664.9px;top:652.8px;width:100px;text-align:center;font-family:'Liberation Serif',serif;font-size:14px;color:#111;white-space:pre;letter-spacing:0.5px;-webkit-text-stroke:0.25px #111">478. 68</div><div class="a t" style="left:785.3px;top:658.3px;width:100px;text-align:center;font-family:'Liberation Serif',serif;font-size:14px;color:#111;white-space:pre;letter-spacing:0.5px;-webkit-text-stroke:0.25px #111">476. 83</div><div class="a t" style="left:905.8px;top:679.8px;width:100px;text-align:center;font-family:'Liberation Serif',serif;font-size:14px;color:#111;white-space:pre;letter-spacing:0.5px;-webkit-text-stroke:0.25px #111">469. 5</div><div class="a t" style="left:1026.2px;top:662.5px;width:100px;text-align:center;font-family:'Liberation Serif',serif;font-size:14px;color:#111;white-space:pre;letter-spacing:0.5px;-webkit-text-stroke:0.25px #111">475. 39</div><div class="a t" style="left:1146.6px;top:572.7px;width:100px;text-align:center;font-family:'Liberation Serif',serif;font-size:14px;color:#111;white-space:pre;letter-spacing:0.5px;-webkit-text-stroke:0.25px #111">505. 97</div><div class="a t" style="left:1267.0px;top:686.6px;width:100px;text-align:center;font-family:'Liberation Serif',serif;font-size:14px;color:#111;white-space:pre;letter-spacing:0.5px;-webkit-text-stroke:0.25px #111">467. 17</div><div class="a t" style="left:1387.5px;top:681.5px;width:100px;text-align:center;font-family:'Liberation Serif',serif;font-size:14px;color:#111;white-space:pre;letter-spacing:0.5px;-webkit-text-stroke:0.25px #111">468. 9</div><div class="a t" style="left:1507.9px;top:686.8px;width:100px;text-align:center;font-family:'Liberation Serif',serif;font-size:14px;color:#111;white-space:pre;letter-spacing:0.5px;-webkit-text-stroke:0.25px #111">467. 11</div><div class="a t" style="left:902px;top:733px;font-size:13px;color:#333;font-family:'Liberation Serif',serif">网络接口<span style="letter-spacing:1.7px">:Ethernet0/18</span></div><div class="a t" style="left:1651px;top:469px;font-size:12px;color:#444">正</div><div class="a t" style="left:1687px;top:469px;font-size:12px;color:#444">常:</div><div class="a t" style="left:1721px;top:469px;font-size:13px;font-weight:bold;color:#168a16">10条</div><div class="a t" style="left:1773px;top:469px;font-size:12px;color:#444">危</div><div class="a t" style="left:1808px;top:469px;font-size:12px;color:#444">险:</div><div class="a t" style="left:1843px;top:469px;font-size:13px;font-weight:bold;color:#e08a00">0条</div><div class="a t" style="left:1651px;top:512px;font-size:12px;color:#444">错</div><div class="a t" style="left:1687px;top:512px;font-size:12px;color:#444">误:</div><div class="a t" style="left:1720px;top:512px;font-size:13px;font-weight:bold;color:#f01010">0条</div><div class="a t" style="left:1773px;top:512px;font-size:12px;color:#444">禁</div><div class="a t" style="left:1808px;top:512px;font-size:12px;color:#444">止:</div><div class="a t" style="left:1843px;top:512px;font-size:13px;font-weight:bold;color:#9a0a0a">0条</div><div class="a" style="left:1640px;top:540px;width:256px;height:210px;overflow:hidden"><div class="a t" style="left:11px;top:15px;font-size:12px;color:#444">正常阈值:</div><div class="a t" style="left:76px;top:15px;font-size:12px;color:#444;white-space:nowrap"><span style="letter-spacing:1.2px">[</span>接口状态<span style="letter-spacing:1.2px"> == up]</span></div><div class="a t" style="left:11px;top:58px;font-size:12px;color:#444">危险阈值:</div><div class="a t" style="left:76px;top:58px;font-size:12px;color:#444;white-space:nowrap"><span style="letter-spacing:1.2px">[</span>发送带宽比<span style="letter-spacing:1.2px">(%) &gt; 70][</span>接收带宽比<span style="letter-spacing:1.2px">(%) &gt; 70]</span></div><div class="a t" style="left:11px;top:101px;font-size:12px;color:#444">错误阈值:</div><div class="a t" style="left:76px;top:101px;font-size:12px;color:#444;white-space:nowrap"><span style="letter-spacing:1.2px">[</span>接口状态<span style="letter-spacing:1.2px"> == down]</span></div><div class="a t" style="left:11px;top:144px;font-size:12px;color:#444">开始时间:</div><div class="a t" style="left:76px;top:144px;font-size:12px;color:#444;white-space:nowrap"><span style="letter-spacing:1.2px">2016-09-26 15:33:15</span></div><div class="a t" style="left:11px;top:187px;font-size:12px;color:#444">结束时间:</div><div class="a t" style="left:76px;top:187px;font-size:12px;color:#444;white-space:nowrap"><span style="letter-spacing:1.2px">2016-09-26 17:33:15</span></div></div><div class="a" style="left:274px;top:770px;width:1622px;height:16px;box-sizing:border-box;border-top:1px solid #9ab8e4;background:linear-gradient(#eef4fc,#d8e4f5)"></div><div class="a t" style="left:276px;top:771px;font-size:12px;font-weight:bold;color:#555">返回值</div><div class="a t" style="left:648px;top:771px;font-size:12px;font-weight:bold;color:#555">最大值</div><div class="a t" style="left:981px;top:771px;font-size:12px;font-weight:bold;color:#555">平均值</div><div class="a t" style="left:1314px;top:771px;font-size:12px;font-weight:bold;color:#555">最小值</div><div class="a t" style="left:1646px;top:771px;font-size:12px;font-weight:bold;color:#555">最新值</div><div class="a" style="left:645px;top:771px;width:1px;height:15px;background:#c5d4ea"></div><div class="a" style="left:978px;top:771px;width:1px;height:15px;background:#c5d4ea"></div><div class="a" style="left:1311px;top:771px;width:1px;height:15px;background:#c5d4ea"></div><div class="a" style="left:1643px;top:771px;width:1px;height:15px;background:#c5d4ea"></div><div class="a" style="left:274px;top:786px;width:1611px;height:22px;box-sizing:border-box;background:#f2f2f2;border-bottom:1px solid #dcdcdc"></div><div class="a" style="left:645px;top:786px;width:1px;height:22px;background:#e2e2e2"></div><div class="a" style="left:978px;top:786px;width:1px;height:22px;background:#e2e2e2"></div><div class="a" style="left:1311px;top:786px;width:1px;height:22px;background:#e2e2e2"></div><div class="a" style="left:1643px;top:786px;width:1px;height:22px;background:#e2e2e2"></div><div class="a t" style="left:277px;top:791px;font-size:12px;color:#444">接收速率<span style="letter-spacing:0.9px">(Kbit/s)</span></div><div class="a t" style="left:649px;top:791px;font-size:12px;color:#444"><span style="letter-spacing:0.9px">1126</span></div><div class="a t" style="left:982px;top:791px;font-size:12px;color:#444"><span style="letter-spacing:0.9px">1055</span></div><div class="a t" style="left:1315px;top:791px;font-size:12px;color:#444"><span style="letter-spacing:0.9px">1008.96</span></div><div class="a t" style="left:1647px;top:791px;font-size:12px;color:#444"><span style="letter-spacing:0.9px">1073.61</span></div><div class="a" style="left:274px;top:808px;width:1611px;height:22px;box-sizing:border-box;background:#ffffff;border-bottom:1px solid #dcdcdc"></div><div class="a" style="left:645px;top:808px;width:1px;height:22px;background:#e2e2e2"></div><div class="a" style="left:978px;top:808px;width:1px;height:22px;background:#e2e2e2"></div><div class="a" style="left:1311px;top:808px;width:1px;height:22px;background:#e2e2e2"></div><div class="a" style="left:1643px;top:808px;width:1px;height:22px;background:#e2e2e2"></div><div class="a t" style="left:277px;top:813px;font-size:12px;color:#444">接口状态</div><div class="a t" style="left:649px;top:813px;font-size:12px;color:#444"><span style="letter-spacing:0.9px">0</span></div><div class="a t" style="left:982px;top:813px;font-size:12px;color:#444"><span style="letter-spacing:0.9px">0</span></div><div class="a t" style="left:1315px;top:813px;font-size:12px;color:#444"><span style="letter-spacing:0.9px">0</span></div><div class="a t" style="left:1647px;top:813px;font-size:12px;color:#444"><span style="letter-spacing:0.9px">0</span></div><div class="a" style="left:274px;top:830px;width:1611px;height:22px;box-sizing:border-box;background:#f2f2f2;border-bottom:1px solid #dcdcdc"></div><div class="a" style="left:645px;top:830px;width:1px;height:22px;background:#e2e2e2"></div><div class="a" style="left:978px;top:830px;width:1px;height:22px;background:#e2e2e2"></div><div class="a" style="left:1311px;top:830px;width:1px;height:22px;background:#e2e2e2"></div><div class="a" style="left:1643px;top:830px;width:1px;height:22px;background:#e2e2e2"></div><div class="a t" style="left:277px;top:835px;font-size:12px;color:#444">发送速率<span style="letter-spacing:0.9px">(Kbit/s)</span></div><div class="a t" style="left:649px;top:835px;font-size:12px;color:#444"><span style="letter-spacing:0.9px">523.6</span></div><div class="a t" style="left:982px;top:835px;font-size:12px;color:#444"><span style="letter-spacing:0.9px">484.58</span></div><div class="a t" style="left:1315px;top:835px;font-size:12px;color:#444"><span style="letter-spacing:0.9px">467.11</span></div><div class="a t" style="left:1647px;top:835px;font-size:12px;color:#444"><span style="letter-spacing:0.9px">467.11</span></div><div class="a" style="left:274px;top:852px;width:1611px;height:22px;box-sizing:border-box;background:#ffffff;border-bottom:1px solid #dcdcdc"></div><div class="a" style="left:645px;top:852px;width:1px;height:22px;background:#e2e2e2"></div><div class="a" style="left:978px;top:852px;width:1px;height:22px;background:#e2e2e2"></div><div class="a" style="left:1311px;top:852px;width:1px;height:22px;background:#e2e2e2"></div><div class="a" style="left:1643px;top:852px;width:1px;height:22px;background:#e2e2e2"></div><div class="a t" style="left:277px;top:857px;font-size:12px;color:#444">输入丢包率<span style="letter-spacing:0.9px">(%)</span></div><div class="a t" style="left:649px;top:857px;font-size:12px;color:#444"><span style="letter-spacing:0.9px">0</span></div><div class="a t" style="left:982px;top:857px;font-size:12px;color:#444"><span style="letter-spacing:0.9px">0</span></div><div class="a t" style="left:1315px;top:857px;font-size:12px;color:#444"><span style="letter-spacing:0.9px">0</span></div><div class="a t" style="left:1647px;top:857px;font-size:12px;color:#444"><span style="letter-spacing:0.9px">0</span></div><div class="a" style="left:274px;top:874px;width:1611px;height:22px;box-sizing:border-box;background:#f2f2f2;border-bottom:1px solid #dcdcdc"></div><div class="a" style="left:645px;top:874px;width:1px;height:22px;background:#e2e2e2"></div><div class="a" style="left:978px;top:874px;width:1px;height:22px;background:#e2e2e2"></div><div class="a" style="left:1311px;top:874px;width:1px;height:22px;background:#e2e2e2"></div><div class="a" style="left:1643px;top:874px;width:1px;height:22px;background:#e2e2e2"></div><div class="a t" style="left:277px;top:879px;font-size:12px;color:#444">接收带宽比<span style="letter-spacing:0.9px">(%)</span></div><div class="a t" style="left:649px;top:879px;font-size:12px;color:#444"><span style="letter-spacing:0.9px">1.13</span></div><div class="a t" style="left:982px;top:879px;font-size:12px;color:#444"><span style="letter-spacing:0.9px">1.06</span></div><div class="a t" style="left:1315px;top:879px;font-size:12px;color:#444"><span style="letter-spacing:0.9px">1.01</span></div><div class="a t" style="left:1647px;top:879px;font-size:12px;color:#444"><span style="letter-spacing:0.9px">1.07</span></div><div class="a" style="left:1885px;top:786px;width:11px;height:111px;background:#efefef"></div><svg class="a" style="left:1886px;top:787px" width="10" height="8"><path d="M1.5 6.5 L5 2 L8.5 6.5 Z" fill="#666"/></svg><svg class="a" style="left:1886px;top:889px" width="10" height="8"><path d="M1.5 1.5 L5 6 L8.5 1.5 Z" fill="#666"/></svg><div class="a" style="left:1885px;top:797px;width:10px;height:64px;box-sizing:border-box;border:1px solid #b8b8b8;border-radius:5px;background:repeating-linear-gradient(135deg,#e2e2e2 0 2px,#c8c8c8 2px 3px)"></div></body></html>
